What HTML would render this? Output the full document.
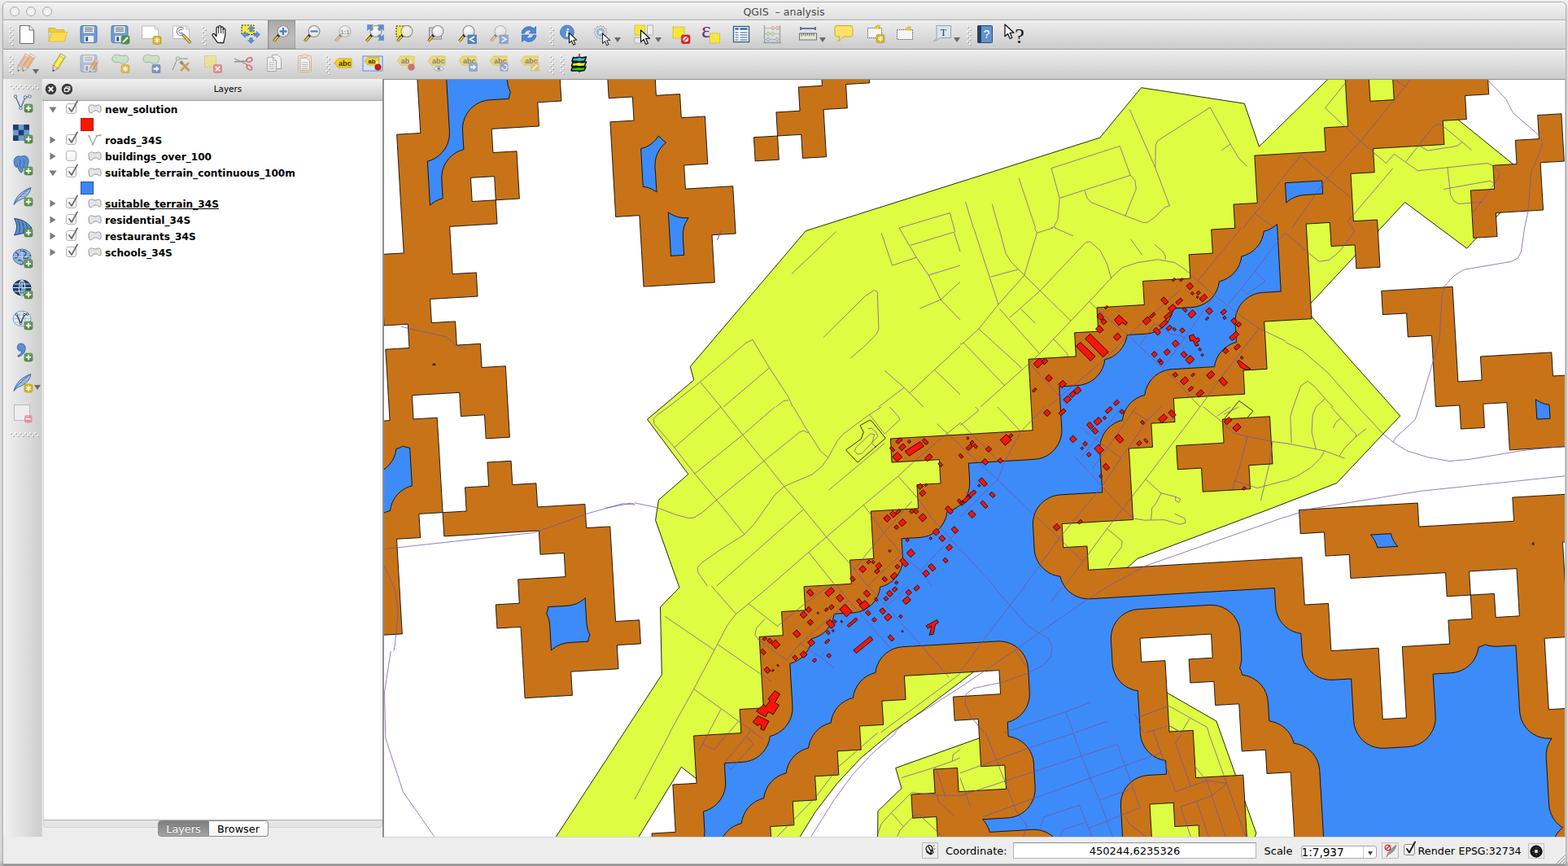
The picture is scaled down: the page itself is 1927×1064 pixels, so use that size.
<!DOCTYPE html>
<html><head><meta charset="utf-8"><title>QGIS - analysis</title>
<style>
html,body{margin:0;padding:0}
body{width:1927px;height:1064px;overflow:hidden;position:relative;background:#cfcfcf;font-family:"DejaVu Sans","Liberation Sans",sans-serif;color:#000}
.shadow{position:absolute;left:0;top:0;width:1927px;height:1064px;background:linear-gradient(#efefef 0,#e6e6e6 12px,#dfdfdf 60px,#dcdcdc 1040px,#d6d6d6 1058px,#b8b8b8 1062px,#b4b4b4 1064px)}
.win{position:absolute;left:4px;top:3px;width:1920px;height:1058px;background:#ededed;border-radius:5px 5px 3px 3px;box-shadow:0 0 0 1px #b0b0b0,0 1px 0 1px #8f8f8f,0 2px 3px 1px rgba(0,0,0,.18);overflow:hidden}
.abs{position:absolute}
.titlebar{position:absolute;left:4px;top:3px;width:1920px;height:21px;border-radius:5px 5px 0 0;background:linear-gradient(#f2f2f2,#eaeaea 45%,#dfdfdf);border-bottom:1px solid #a6a6a6}
.title{position:absolute;left:4px;top:6px;width:1919px;text-align:center;font-size:12.5px;line-height:18px;color:#4b4b4b;white-space:pre}
.tl{position:absolute;top:7.6px;width:10.5px;height:10.5px;border-radius:50%;border:1px solid #a9a9a9;background:radial-gradient(circle at 50% 70%,#fafafa,#e4e4e4);box-sizing:content-box}
.tb{position:absolute;left:4px;width:1920px;height:35px;background:linear-gradient(#fbfbfb 0,#ececec 1.5px,#dddddd 50%,#cbcbcb);border-bottom:1px solid #999}
.tb2{height:36px;border-bottom:none}
.lt{position:absolute;left:4px;top:97px;width:48px;height:931px;background:linear-gradient(90deg,#fff 0,#efefef 1.5px,#e0e0e0 50%,#cdcdcd 46px,#d9d9d9 48px)}
.ic{position:absolute;width:24px;height:24px;overflow:visible}
.hdl{position:absolute;width:5px;height:24px}
.lhead{position:absolute;left:52px;top:97px;width:418px;height:27px;background:linear-gradient(#f1f1f1,#dedede 55%,#c9c9c9);border-bottom:1px solid #a2a2a2;box-sizing:border-box}
.lhead span{position:absolute;left:0;width:456px;text-align:center;top:5px;font-size:10.4px;line-height:14px}
.tree{position:absolute;left:53px;top:124px;width:417px;height:883px;background:#fff;border-left:1px solid #d4d4d4;border-right:1px solid #fff;box-sizing:border-box}
.row{position:absolute;left:0;height:20px;font-weight:bold;font-size:12.15px;line-height:20px;white-space:nowrap}
.row .t{position:absolute;left:75px;top:1px}
.cb{position:absolute;left:27px;top:3px;width:13px;height:13px;border:1px solid #b4b4b4;border-radius:3px;background:linear-gradient(#fff,#f1f1f1);box-sizing:border-box}
.sw{position:absolute;left:45px;width:16px;height:16px;box-sizing:border-box}
.tabs{position:absolute;left:53px;top:1007px;width:417px;height:21px;background:#ededed}
.tabpane{position:absolute;left:0;top:0;width:417px;height:10px;background:#e4e4e4;border:1px solid #d0d0d0;border-top:1px solid #b0b0b0;border-radius:0 0 4px 4px;box-sizing:border-box}
.tab{position:absolute;top:1px;height:20px;box-sizing:border-box;font-size:12.8px;line-height:20px;text-align:center;border:1px solid #8b8b8b}
.status{position:absolute;left:4px;top:1029px;width:1920px;height:32px;background:#ededed;box-sizing:border-box}
.st{position:absolute;font-size:13px;line-height:16px;white-space:nowrap}
.map{position:absolute;overflow:hidden}
.mapframe{position:absolute;left:470px;top:97px;width:1454px;height:932px;border-left:2px solid #8f8f8f;border-top:1px solid #8f8f8f;border-right:1px solid #c6c6c6;border-bottom:1px solid #d2d2d2;box-sizing:border-box;pointer-events:none}

</style></head><body>
<div class="shadow"></div>
<div class="win"></div>
<div class="titlebar"></div>
<div class="tl" style="left:11.7px"></div><div class="tl" style="left:31.7px"></div><div class="tl" style="left:51.7px"></div>
<div class="title">QGIS  – analysis</div>
<div class="tb" style="top:25px"></div>
<div class="tb tb2" style="top:61px"></div>
<div class="lt"></div>
<div class="lhead"><span>Layers</span></div>
<div class="tree">
 <div class="row" style="top:0px"><svg class="abs" style="left:6px;top:7px" width="10" height="8" viewBox="0 0 10 8"><path d="M0.500,0.500h9l-4.500,7z" fill="#7c7c7c"/></svg><div class="cb"><svg class="abs" style="left:0;top:-5px;overflow:visible" width="14" height="16" viewBox="0 0 14 16"><path d="M3,10l3,4l7,-12.500" fill="none" stroke="#6e6e6e" stroke-width="1.800" stroke-linecap="round" stroke-linejoin="round"/></svg></div><svg class="abs" style="left:54px;top:4px" width="17" height="12" viewBox="0 0 17 12"><path d="M1,3.500c.5,-3 4,-3 6,-2c1.500,.8 2.500,.8 4,0c2,-1 5,-.5 5,2.500c0,2.500 .5,4 -.5,5.500c-1.500,1.500 -3,-1 -5,-1.500c-2,-.5 -3.500,.5 -5,2c-1.500,1.500 -3.500,1 -4,-1c-.5,-2 -.8,-3.500 -.5,-5.500z" fill="#e4e4e4" stroke="#8a8a8a" stroke-width=".9"/></svg><span class="t">new_solution</span></div>
 <div class="sw" style="top:21px;background:#ff1500;border:1px solid #b8160c"></div>
 <div class="row" style="top:38px"><svg class="abs" style="left:7px;top:5px" width="8" height="10" viewBox="0 0 8 10"><path d="M0.500,0.500v9l7,-4.500z" fill="#7c7c7c"/></svg><div class="cb"><svg class="abs" style="left:0;top:-5px;overflow:visible" width="14" height="16" viewBox="0 0 14 16"><path d="M3,10l3,4l7,-12.500" fill="none" stroke="#6e6e6e" stroke-width="1.800" stroke-linecap="round" stroke-linejoin="round"/></svg></div><svg class="abs" style="left:54px;top:3px" width="17" height="14" viewBox="0 0 17 14"><path d="M1.500,2l4.500,10.500l5,-10.500l4.500,-1" fill="none" stroke="#666" stroke-width=".8"/><g fill="#fff" stroke="#777" stroke-width=".6"><circle cx="1.500" cy="2" r="1"/><circle cx="6" cy="12.500" r="1"/><circle cx="11" cy="2" r="1"/><circle cx="15.500" cy="1" r="1"/></g></svg><span class="t">roads_34S</span></div>
 <div class="row" style="top:58px"><svg class="abs" style="left:7px;top:5px" width="8" height="10" viewBox="0 0 8 10"><path d="M0.500,0.500v9l7,-4.500z" fill="#7c7c7c"/></svg><div class="cb"></div><svg class="abs" style="left:54px;top:4px" width="17" height="12" viewBox="0 0 17 12"><path d="M1,3.500c.5,-3 4,-3 6,-2c1.500,.8 2.500,.8 4,0c2,-1 5,-.5 5,2.500c0,2.500 .5,4 -.5,5.500c-1.500,1.500 -3,-1 -5,-1.500c-2,-.5 -3.500,.5 -5,2c-1.500,1.500 -3.500,1 -4,-1c-.5,-2 -.8,-3.500 -.5,-5.500z" fill="#e4e4e4" stroke="#8a8a8a" stroke-width=".9"/></svg><span class="t">buildings_over_100</span></div>
 <div class="row" style="top:78px"><svg class="abs" style="left:6px;top:7px" width="10" height="8" viewBox="0 0 10 8"><path d="M0.500,0.500h9l-4.500,7z" fill="#7c7c7c"/></svg><div class="cb"><svg class="abs" style="left:0;top:-5px;overflow:visible" width="14" height="16" viewBox="0 0 14 16"><path d="M3,10l3,4l7,-12.500" fill="none" stroke="#6e6e6e" stroke-width="1.800" stroke-linecap="round" stroke-linejoin="round"/></svg></div><svg class="abs" style="left:54px;top:4px" width="17" height="12" viewBox="0 0 17 12"><path d="M1,3.500c.5,-3 4,-3 6,-2c1.500,.8 2.500,.8 4,0c2,-1 5,-.5 5,2.500c0,2.500 .5,4 -.5,5.500c-1.500,1.500 -3,-1 -5,-1.500c-2,-.5 -3.500,.5 -5,2c-1.500,1.500 -3.500,1 -4,-1c-.5,-2 -.8,-3.500 -.5,-5.500z" fill="#e4e4e4" stroke="#8a8a8a" stroke-width=".9"/></svg><span class="t">suitable_terrain_continuous_100m</span></div>
 <div class="sw" style="top:99px;background:#3b87f5;border:1px solid #2a55a0"></div>
 <div class="row" style="top:116px"><svg class="abs" style="left:7px;top:5px" width="8" height="10" viewBox="0 0 8 10"><path d="M0.500,0.500v9l7,-4.500z" fill="#7c7c7c"/></svg><div class="cb"><svg class="abs" style="left:0;top:-5px;overflow:visible" width="14" height="16" viewBox="0 0 14 16"><path d="M3,10l3,4l7,-12.500" fill="none" stroke="#6e6e6e" stroke-width="1.800" stroke-linecap="round" stroke-linejoin="round"/></svg></div><svg class="abs" style="left:54px;top:4px" width="17" height="12" viewBox="0 0 17 12"><path d="M1,3.500c.5,-3 4,-3 6,-2c1.500,.8 2.500,.8 4,0c2,-1 5,-.5 5,2.500c0,2.500 .5,4 -.5,5.500c-1.500,1.500 -3,-1 -5,-1.500c-2,-.5 -3.500,.5 -5,2c-1.500,1.500 -3.500,1 -4,-1c-.5,-2 -.8,-3.500 -.5,-5.500z" fill="#e4e4e4" stroke="#8a8a8a" stroke-width=".9"/></svg><span class="t" style="text-decoration:underline">suitable_terrain_34S</span></div>
 <div class="row" style="top:136px"><svg class="abs" style="left:7px;top:5px" width="8" height="10" viewBox="0 0 8 10"><path d="M0.500,0.500v9l7,-4.500z" fill="#7c7c7c"/></svg><div class="cb"><svg class="abs" style="left:0;top:-5px;overflow:visible" width="14" height="16" viewBox="0 0 14 16"><path d="M3,10l3,4l7,-12.500" fill="none" stroke="#6e6e6e" stroke-width="1.800" stroke-linecap="round" stroke-linejoin="round"/></svg></div><svg class="abs" style="left:54px;top:4px" width="17" height="12" viewBox="0 0 17 12"><path d="M1,3.500c.5,-3 4,-3 6,-2c1.500,.8 2.500,.8 4,0c2,-1 5,-.5 5,2.500c0,2.500 .5,4 -.5,5.500c-1.500,1.500 -3,-1 -5,-1.500c-2,-.5 -3.500,.5 -5,2c-1.500,1.500 -3.500,1 -4,-1c-.5,-2 -.8,-3.500 -.5,-5.500z" fill="#e4e4e4" stroke="#8a8a8a" stroke-width=".9"/></svg><span class="t">residential_34S</span></div>
 <div class="row" style="top:156px"><svg class="abs" style="left:7px;top:5px" width="8" height="10" viewBox="0 0 8 10"><path d="M0.500,0.500v9l7,-4.500z" fill="#7c7c7c"/></svg><div class="cb"><svg class="abs" style="left:0;top:-5px;overflow:visible" width="14" height="16" viewBox="0 0 14 16"><path d="M3,10l3,4l7,-12.500" fill="none" stroke="#6e6e6e" stroke-width="1.800" stroke-linecap="round" stroke-linejoin="round"/></svg></div><svg class="abs" style="left:54px;top:4px" width="17" height="12" viewBox="0 0 17 12"><path d="M1,3.500c.5,-3 4,-3 6,-2c1.500,.8 2.500,.8 4,0c2,-1 5,-.5 5,2.500c0,2.500 .5,4 -.5,5.500c-1.500,1.500 -3,-1 -5,-1.500c-2,-.5 -3.500,.5 -5,2c-1.500,1.500 -3.500,1 -4,-1c-.5,-2 -.8,-3.500 -.5,-5.500z" fill="#e4e4e4" stroke="#8a8a8a" stroke-width=".9"/></svg><span class="t">restaurants_34S</span></div>
 <div class="row" style="top:176px"><svg class="abs" style="left:7px;top:5px" width="8" height="10" viewBox="0 0 8 10"><path d="M0.500,0.500v9l7,-4.500z" fill="#7c7c7c"/></svg><div class="cb"><svg class="abs" style="left:0;top:-5px;overflow:visible" width="14" height="16" viewBox="0 0 14 16"><path d="M3,10l3,4l7,-12.500" fill="none" stroke="#6e6e6e" stroke-width="1.800" stroke-linecap="round" stroke-linejoin="round"/></svg></div><svg class="abs" style="left:54px;top:4px" width="17" height="12" viewBox="0 0 17 12"><path d="M1,3.500c.5,-3 4,-3 6,-2c1.500,.8 2.500,.8 4,0c2,-1 5,-.5 5,2.500c0,2.500 .5,4 -.5,5.500c-1.500,1.500 -3,-1 -5,-1.500c-2,-.5 -3.500,.5 -5,2c-1.500,1.500 -3.500,1 -4,-1c-.5,-2 -.8,-3.500 -.5,-5.500z" fill="#e4e4e4" stroke="#8a8a8a" stroke-width=".9"/></svg><span class="t">schools_34S</span></div>
</div>
<div class="tabs"><div class="tabpane"></div>
 <div class="tab" style="left:141px;width:63px;border-radius:4px 0 0 4px;background:linear-gradient(#7d7d7d,#a3a3a3);color:#fff;text-shadow:0 -1px 0 rgba(0,0,0,.35)">Layers</div>
 <div class="tab" style="left:204px;width:73px;border-radius:0 4px 4px 0;border-left:none;background:linear-gradient(#fff,#f4f4f4)">Browser</div>
</div>
<div class="status">
 <div class="abs" style="left:1129px;top:6px;width:20px;height:20px;border:1px solid #b9b9b9;box-sizing:border-box"><svg class="abs" style="left:1px;top:1px" width="16" height="16" viewBox="0 0 16 16"><path d="M5,2.500c3,-2 6,0 6,3.500c0,3 -2,4 -3,6c-1,-2 -5,-3 -5,-6c0,-1.500 .8,-2.800 2,-3.500zM6,3l3,6M3.500,9c2,3 6,5 8,2c1.500,-2.500 -1,-4 -3,-3.500" fill="none" stroke="#1a1a1a" stroke-width="1.300"/><circle cx="9" cy="11.500" r="1.200" fill="#1a1a1a"/><path d="M12,3l1.500,-1.500M12.500,6l2,0" stroke="#1a1a1a" stroke-width=".7"/></svg></div>
 <div class="st" style="left:1158px;top:8.9px">Coordinate:</div>
 <div class="abs" style="left:1241px;top:6px;width:299px;height:20px;background:#fff;border:1px solid #b3b3b3;border-top-color:#8f8f8f;box-sizing:border-box"></div>
 <div class="st" style="left:1241px;top:8.9px;width:299px;text-align:center">450244,6235326</div>
 <div class="st" style="left:1549.5px;top:8.9px">Scale</div>
 <div class="abs" style="left:1595px;top:10px;width:93px;height:16px;background:#fff;border:1px solid #a9a9a9;border-radius:3px;box-sizing:border-box"></div>
 <div class="abs" style="left:1671px;top:11px;width:1px;height:14px;background:#c8c8c8"></div>
 <div class="abs" style="left:1677px;top:17px;width:0;height:0;border-left:3.5px solid transparent;border-right:3.5px solid transparent;border-top:5px solid #444"></div>
 <div class="st" style="left:1595.5px;top:9.5px;font-size:13.6px">1:7,937</div>
 <div class="abs" style="left:1694px;top:6px;width:21px;height:20px;border:1px solid #bdbdbd;box-sizing:border-box"><svg class="abs" style="left:1px;top:0" width="18" height="18" viewBox="0 0 18 18"><path d="M4,17c1,-5 4,-9 12,-15c-1,5 -3,8 -8,11c-2,1 -3,2 -4,4z" fill="#9a9a9a" stroke="#666" stroke-width=".6"/><circle cx="5.500" cy="5.500" r="3.300" fill="none" stroke="#e02020" stroke-width="1.300"/><path d="M3.200,7.800l4.600,-4.600" stroke="#e02020" stroke-width="1.300"/></svg></div>
 <div class="abs" style="left:1721px;top:8px;width:14px;height:14px;border:1px solid #8c8c8c;border-radius:3px;background:linear-gradient(#fff,#e9e9e9);box-sizing:border-box"><svg class="abs" style="left:0;top:-5px;overflow:visible" width="15" height="17" viewBox="0 0 15 17"><path d="M3,10l3,4.500l7,-13" fill="none" stroke="#1a1a1a" stroke-width="1.900" stroke-linecap="round" stroke-linejoin="round"/></svg></div>
 <div class="st" style="left:1738.5px;top:8.9px;font-size:12.8px">Render</div>
 <div class="st" style="left:1788.5px;top:8.9px;font-size:12.5px">EPSG:32734</div>
 <div class="abs" style="left:1874px;top:7px;width:20px;height:19px;border:1px solid #c2c2c2;box-sizing:border-box"><svg class="abs" style="left:1px;top:1px" width="16" height="16" viewBox="0 0 16 16"><circle cx="8" cy="8" r="6.500" fill="#555" stroke="#111" stroke-width="2.200"/><path d="M8,1.200c-3.500,2.500 -3.500,11 0,13.600M8,1.200c3.500,2.500 3.500,11 0,13.600M1.200,8c2.500,-3.500 11,-3.500 13.600,0M1.200,8c2.500,3.500 11,3.500 13.600,0" fill="none" stroke="#111" stroke-width="1.800"/><rect x="5.800" y="5.800" width="4.400" height="4.400" fill="#ededed" stroke="#111" stroke-width=".8"/></svg></div>
 <svg class="abs" style="left:1908px;top:21px" width="12" height="12" viewBox="0 0 12 12"><path d="M0.500,11.500l11,-11M4.500,11.500l7,-7M8.500,11.500l3,-3" stroke="#8a8a8a" stroke-width="1"/><path d="M1.500,11.500l10,-10M5.500,11.500l6,-6M9.500,11.500l2,-2" stroke="#fff" stroke-width=".6"/></svg>
</div>
<div class="mapframe"></div>
<svg width="0" height="0" style="position:absolute"><defs>
<radialGradient id="lens" cx="40%" cy="35%" r="70%"><stop offset="0" stop-color="#ffffff"/><stop offset="1" stop-color="#dcdcdc"/></radialGradient>
<linearGradient id="gplus" x1="0" y1="0" x2="0" y2="1"><stop offset="0" stop-color="#6aa85a"/><stop offset="1" stop-color="#4d8a3f"/></linearGradient>
<g id="bplus"><rect x="0" y="0" width="10" height="10" rx="2" fill="url(#gplus)" stroke="#3f7a33" stroke-width=".6"/><path d="M5,1.8v6.4M1.8,5h6.4" stroke="#fff" stroke-width="2"/></g>
<g id="bstar"><rect x="0" y="0" width="10" height="10" rx="2" fill="#d9b21f" stroke="#b8940f" stroke-width=".6"/><path d="M5,1.5v7M2,3.2l6,3.6M8,3.2l-6,3.6" stroke="#fff" stroke-width="1.3"/></g>
<g id="barrow"><rect x="0" y="0" width="10" height="10" rx="1" fill="#5b7fc0" stroke="#4466a5" stroke-width=".6"/><path d="M1.5,3.8h3.5v-2.3l3.8,3.5l-3.8,3.5v-2.3h-3.5z" fill="#fff"/></g>
<g id="mag"><path d="M8.8,13.2l-6.3,7.3" stroke="#2b2b2b" stroke-width="3.4" stroke-linecap="butt"/><path d="M7.7,14.6l-5,5.8" stroke="#f7c90c" stroke-width="2.2"/><path d="M9.4,12.5l-1.6,1.9" stroke="#111" stroke-width="3.2"/><circle cx="14" cy="8.5" r="7" fill="url(#lens)" stroke="#8c8c8c" stroke-width="1.1"/></g>
<g id="magf" opacity=".5"><use href="#mag"/></g>
<path id="cursor" d="M0,0l0,9.5l2.3,-2.1l1.7,3.9l1.7,-.8l-1.7,-3.8l3.1,-.1z" fill="#fff" stroke="#111" stroke-width=".8" stroke-linejoin="round"/>
<g id="floppy"><rect x="2" y="1.5" width="20" height="21" rx="2" fill="#6e9cd2" stroke="#4b79b1" stroke-width="1"/><rect x="5.5" y="2.2" width="13" height="8.3" fill="#f6f6f6" stroke="#9db6d6" stroke-width=".4"/><path d="M7,4.3h10M7,6.3h10M7,8.3h10" stroke="#555" stroke-width=".9"/><rect x="6.5" y="14" width="11.5" height="8" fill="#efefef"/><rect x="8.3" y="15.3" width="2.8" height="5.4" fill="#2f5a8d"/></g>
<g id="tag"><path d="M0,5.5l4.5,-5.5h16.5v11h-16.5z" fill="#f5d21a" stroke="#c9a70c" stroke-width=".9"/></g>
<g id="blob"><path d="M2,5c1,-4 6,-4.5 9,-3c3,1.5 5,-.5 8,0c3,.8 3.5,5 1.5,8c-2,2.5 -6,2.5 -8.5,1c-2.5,-1.5 -5,.5 -7.5,-.5c-2.500,-1 -3,-3.500 -2.500,-5.500z" fill="#bfe0c0" stroke="#8d9a8d" stroke-width=".9"/></g>
<g id="dots"><circle cx="1.900" cy="1.900" r="1" fill="#9a9a9a"/><circle cx="1.100" cy="1.100" r="1" fill="#fff"/></g>
</defs></svg>
<svg class="abs" style="left:10.5px;top:31.5px" width="7" height="26" viewBox="0 0 7 26"><use href="#dots" x="0" y="0"/><use href="#dots" x="3" y="3"/><use href="#dots" x="0" y="6"/><use href="#dots" x="3" y="9"/><use href="#dots" x="0" y="12"/><use href="#dots" x="3" y="15"/><use href="#dots" x="0" y="18"/><use href="#dots" x="3" y="21"/></svg>
<svg class="ic" style="left:21.0px;top:29.7px" viewBox="0 0 24 24"><path d="M3.500,1.500h11.500l5.500,5.500v15.500a1,1 0 0 1 -1,1h-15a1,1 0 0 1 -1,-1z" fill="#fff" stroke="#6c6c6c" stroke-width="1.100"/><path d="M15,1.500v5.500h5.500" fill="#f4f4f4" stroke="#6c6c6c" stroke-width="1"/></svg>
<svg class="ic" style="left:58.8px;top:29.7px" viewBox="0 0 24 24"><path d="M1,4.500h7.500l1,2h10.500v3h-19z" fill="#f0cb3c" stroke="#cfad35" stroke-width=".8"/><path d="M1,4.500v16.500" stroke="#cfad35" stroke-width=".8"/><path d="M1,21l3.800,-11.500h19l-3.800,11.500z" fill="#fcdc4d" stroke="#d6b53c" stroke-width=".8"/></svg>
<svg class="ic" style="left:97.0px;top:29.7px" viewBox="0 0 24 24"><use href="#floppy"/></svg>
<svg class="ic" style="left:135.2px;top:29.7px" viewBox="0 0 24 24"><use href="#floppy"/><g transform="translate(14,14)"><rect width="10" height="10" rx="2" fill="#4f9150" stroke="#3e7a40" stroke-width=".6"/><path d="M2.500,7.500l5,-5" stroke="#fff" stroke-width="2.200" stroke-linecap="round"/></g></svg>
<svg class="ic" style="left:172.5px;top:29.7px" viewBox="0 0 24 24"><path d="M1.500,2h16l4,4v11.500h-20z" fill="#fff" stroke="#b4b4b4" stroke-width=".9"/><path d="M17.500,2v4h4" fill="none" stroke="#b4b4b4" stroke-width=".8"/><use href="#bstar" x="15" y="14.500"/></svg>
<svg class="ic" style="left:210.5px;top:29.7px" viewBox="0 0 24 24"><path d="M1.500,2h16l4,4v11.500h-20z" fill="#fff" stroke="#b4b4b4" stroke-width=".9"/><path d="M17.500,2v4h4" fill="none" stroke="#b4b4b4" stroke-width=".8"/><path d="M14,13l8,8.500" stroke="#6b5a20" stroke-width="3.600" stroke-linecap="round"/><path d="M14,13l8,8.500" stroke="#e9c244" stroke-width="2.200" stroke-linecap="round"/><path d="M14.500,13.500l-3,-3.200" stroke="#9a9a9a" stroke-width="3"/><path d="M13.800,6.200a3.600,3.600 0 1 0 -1.500,5.800" fill="none" stroke="#555" stroke-width="3.400"/><path d="M13.800,6.200a3.600,3.600 0 1 0 -1.500,5.800" fill="none" stroke="#ececec" stroke-width="2"/></svg>
<svg class="abs" style="left:247.5px;top:31.5px" width="7" height="26" viewBox="0 0 7 26"><use href="#dots" x="0" y="0"/><use href="#dots" x="3" y="3"/><use href="#dots" x="0" y="6"/><use href="#dots" x="3" y="9"/><use href="#dots" x="0" y="12"/><use href="#dots" x="3" y="15"/><use href="#dots" x="0" y="18"/><use href="#dots" x="3" y="21"/></svg>
<svg class="ic" style="left:259.0px;top:29.7px" viewBox="0 0 24 24"><path d="M8.500,22.500c-2,-2.800 -4.500,-6 -6.300,-8.800c-1,-1.700 1,-3 2.400,-1.700l2.400,2.500v-10c0,-2 2.600,-2 2.700,0v-1.500c0,-2 2.800,-2 2.800,0v1.300c0,-1.800 2.700,-1.800 2.700,0v2c.2,-1.700 2.600,-1.500 2.600,.3c0,4 .5,8 -1,11c-.5,1.500 -1,3 -1,5z" fill="#fff" stroke="#111" stroke-width="1.200" stroke-linejoin="round"/><path d="M9.700,4.500v6.500M12.500,4v7M15.200,5v6.300" stroke="#111" stroke-width=".9"/></svg>
<svg class="ic" style="left:296.0px;top:29.7px" viewBox="0 0 24 24"><rect x="1" y="1" width="15" height="11.500" fill="#f6e73a" stroke="#222" stroke-width="1" stroke-dasharray="2,1.500"/><g fill="#5b8fd0" stroke="#3f6fae" stroke-width=".5"><path d="M12.500,1.500l4,4h-2.300v3.500h-3.400v-3.500h-2.300z"/><path d="M12.500,23.500l4,-4h-2.300v-3h-3.400v3h-2.300z"/><path d="M1.500,12.500l4,-4v2.300h3.500v3.400h-3.500v2.300z"/><path d="M23.500,12.500l-4,-4v2.300h-3.500v3.400h3.500v2.300z"/></g></svg>
<div class="abs" style="left:329px;top:25px;width:34px;height:35px;background:linear-gradient(#a9a9a9,#bdbdbd 60%,#b3b3b3);box-shadow:inset 1px 0 2px rgba(0,0,0,.25),inset -1px 0 1px rgba(0,0,0,.12)"></div>
<svg class="ic" style="left:334.0px;top:29.7px" viewBox="0 0 24 24"><use href="#mag"/><path d="M14,4v9M9.500,8.500h9" stroke="#4a7fc8" stroke-width="2.300"/></svg>
<svg class="ic" style="left:371.5px;top:29.7px" viewBox="0 0 24 24"><use href="#mag"/><path d="M9.500,8.500h9" stroke="#4a7fc8" stroke-width="2.300"/></svg>
<svg class="ic" style="left:409.5px;top:29.7px" viewBox="0 0 24 24"><use href="#magf"/><text x="14" y="11.500" font-size="8" font-weight="bold" text-anchor="middle" fill="#9a9a9a" font-family="Liberation Sans,sans-serif">1:1</text></svg>
<svg class="ic" style="left:448.0px;top:29.7px" viewBox="0 0 24 24"><use href="#mag"/><g fill="#5b8fd0" stroke="#3f6fae" stroke-width=".4"><path d="M3.500,0.500h7l-2.300,2.300l2.800,2.800l-2.400,2.400l-2.800,-2.800l-2.300,2.300z"/><path d="M23.500,0.500v7l-2.300,-2.300l-2.800,2.800l-2.400,-2.400l2.800,-2.800l-2.300,-2.300z"/><path d="M23.500,19.500h-7l2.300,-2.300l-2.800,-2.800l2.400,-2.400l2.800,2.800l2.300,-2.300z"/></g></svg>
<svg class="ic" style="left:486.0px;top:29.7px" viewBox="0 0 24 24"><rect x="1" y="2" width="17" height="13" fill="#f6e73a" stroke="#222" stroke-width="1" stroke-dasharray="2,1.500"/><g opacity=".93"><use href="#mag"/></g><path d="M9,3h8v11h-8" fill="#efe9c4" opacity=".55"/></svg>
<svg class="ic" style="left:524.0px;top:29.7px" viewBox="0 0 24 24"><rect x="3.500" y="4" width="15" height="14" fill="#d8c8d8" stroke="#857a85" stroke-width=".9"/><use href="#mag"/></svg>
<svg class="ic" style="left:562.0px;top:29.7px" viewBox="0 0 24 24"><use href="#mag"/><rect x="13" y="13" width="10.500" height="10.500" fill="#4f83c7" stroke="#3a66a5" stroke-width=".6"/><path d="M21,15l-5.500,3.300l5.500,3.300" fill="none" stroke="#fff" stroke-width="1.800"/></svg>
<svg class="ic" style="left:600.5px;top:29.7px" viewBox="0 0 24 24"><use href="#magf"/><g opacity=".55"><rect x="13" y="13" width="10.500" height="10.500" fill="#4f83c7" stroke="#3a66a5" stroke-width=".6"/><path d="M15.500,15l5.500,3.300l-5.500,3.300" fill="none" stroke="#fff" stroke-width="1.800"/></g></svg>
<svg class="ic" style="left:638.0px;top:29.7px" viewBox="0 0 24 24"><path d="M3,11a9,9 0 0 1 15,-6l2.500,-2.500v8.500h-8.500l3,-3a5.500,5.500 0 0 0 -8.500,3z" fill="#4a8ad8" stroke="#2f68b5" stroke-width=".7"/><path d="M21,13a9,9 0 0 1 -15,6l-2.500,2.500v-8.500h8.500l-3,3a5.500,5.500 0 0 0 8.500,-3z" fill="#4a8ad8" stroke="#2f68b5" stroke-width=".7"/></svg>
<svg class="abs" style="left:675px;top:31.5px" width="7" height="26" viewBox="0 0 7 26"><use href="#dots" x="0" y="0"/><use href="#dots" x="3" y="3"/><use href="#dots" x="0" y="6"/><use href="#dots" x="3" y="9"/><use href="#dots" x="0" y="12"/><use href="#dots" x="3" y="15"/><use href="#dots" x="0" y="18"/><use href="#dots" x="3" y="21"/></svg>
<svg class="ic" style="left:687.0px;top:29.7px" viewBox="0 0 24 24"><circle cx="10" cy="9.500" r="8.500" fill="#5b8fd0" stroke="#3f72b5" stroke-width=".8"/><text x="10" y="14.500" font-size="14" font-style="italic" font-weight="bold" text-anchor="middle" fill="#fff" font-family="Liberation Serif,serif">i</text><g transform="translate(12.500,10.500) scale(1.300)"><use href="#cursor"/></g></svg>
<svg class="ic" style="left:729.0px;top:29.7px" viewBox="0 0 24 24"><path d="M9,1l1.500,2.200l2.600,-.8l.4,2.700l2.700,.4l-.8,2.600l2.200,1.500l-2.200,1.500l.8,2.600l-2.700,.4l-.4,2.700l-2.600,-.8l-1.500,2.200l-1.500,-2.200l-2.600,.8l-.4,-2.700l-2.700,-.4l.8,-2.600l-2.200,-1.500l2.200,-1.500l-.8,-2.600l2.700,-.4l.4,-2.700l2.600,.8z" fill="#e6e6e6" stroke="#9a9a9a" stroke-width=".8"/><circle cx="9" cy="9.600" r="4.800" fill="#9db8de" stroke="#7f9cc8" stroke-width=".6"/><path d="M7.500,7.200v4.800l4,-2.400z" fill="#fff"/><g opacity=".85" transform="translate(11.500,11) scale(1.300)"><use href="#cursor"/></g></svg>
<svg class="abs" style="left:755.0px;top:46.0px" width="8" height="6" viewBox="0 0 8 6"><path d="M0,0h8l-4,6z" fill="#6a6a6a"/></svg>
<svg class="ic" style="left:779.0px;top:29.7px" viewBox="0 0 24 24"><rect x="1" y="1" width="12.500" height="12" fill="#f6e73a" stroke="#cdbd2a" stroke-width=".7"/><rect x="16.500" y="1" width="7" height="12" fill="#ececec" stroke="#a6a6a6" stroke-width=".8"/><rect x="1" y="16.500" width="12.500" height="6.500" fill="#ececec" stroke="#a6a6a6" stroke-width=".8"/><g transform="translate(8.500,7) scale(1.550)"><use href="#cursor"/></g></svg>
<svg class="abs" style="left:805.0px;top:46.0px" width="8" height="6" viewBox="0 0 8 6"><path d="M0,0h8l-4,6z" fill="#6a6a6a"/></svg>
<svg class="ic" style="left:824.5px;top:29.7px" viewBox="0 0 24 24"><rect x="2" y="3" width="14" height="14" fill="#f6e73a" stroke="#b9a51e" stroke-width=".9" stroke-dasharray="1.500,1.200"/><rect x="12.500" y="13" width="10.500" height="10.500" rx="2" fill="#e02020" stroke="#b81414" stroke-width=".6"/><circle cx="17.750" cy="18.250" r="3.300" fill="#fff"/><path d="M15.500,20.500l4.500,-4.500" stroke="#e02020" stroke-width="1.500"/></svg>
<svg class="ic" style="left:862.0px;top:29.7px" viewBox="0 0 24 24"><text x="0" y="16" font-size="28" fill="#6b2f7e" font-family="Liberation Serif,serif">ε</text><rect x="10.500" y="11" width="12" height="12" fill="#f6e73a" stroke="#b9a51e" stroke-width=".9" stroke-dasharray="1.500,1.200"/></svg>
<svg class="ic" style="left:899.0px;top:29.7px" viewBox="0 0 24 24"><rect x="2.500" y="2.500" width="19" height="19" fill="#fff" stroke="#2e5a84" stroke-width="1.300"/><rect x="3.500" y="3.500" width="17" height="4" fill="#cfe0f2"/><path d="M4.500,5.500h4M10.500,5.500h9" stroke="#2e5a84" stroke-width="1.800"/><path d="M4.500,10h4M10.500,10h9M4.500,13h4M10.500,13h9M4.500,16h4M10.500,16h9M4.500,19h4M10.500,19h9" stroke="#2e5a84" stroke-width="1.100"/></svg>
<svg class="ic" style="left:937.0px;top:29.7px" viewBox="0 0 24 24"><g opacity=".6"><path d="M2.500,1v21M21.500,1v21M1,22.500h22" stroke="#777" stroke-width="1.300" fill="none"/><path d="M2.500,4.500h19M2.500,11.500h19M2.500,18.500h19" stroke="#888" stroke-width=".7"/><g stroke-width=".8"><path d="M13,2l2.500,2.500l-2.500,2.500l-2.500,-2.500zM18.500,2l2.500,2.500l-2.500,2.500l-2.500,-2.500z" fill="#f4b4b4" stroke="#d24a4a"/><path d="M7,9l2.500,2.500l-2.500,2.500l-2.500,-2.500zM12.500,9l2.500,2.500l-2.500,2.500l-2.500,-2.500z" fill="#b8e0b8" stroke="#4aa24a"/><path d="M7,16l2.500,2.500l-2.500,2.500l-2.500,-2.500zM18,16l2.500,2.500l-2.500,2.500l-2.500,-2.500z" fill="#b4cdf0" stroke="#4a7ac2"/></g></g></svg>
<svg class="ic" style="left:981.0px;top:29.7px" viewBox="0 0 24 24"><path d="M3,3v4M21,3v4M3,5h18" stroke="#2e5a84" stroke-width="1.400" fill="none"/><rect x="1.500" y="11" width="21" height="8" fill="#e0e6d8" stroke="#666" stroke-width=".9"/><path d="M4,11v3.500M6.500,11v2.500M9,11v3.500M11.500,11v2.500M14,11v3.500M16.500,11v2.500M19,11v3.500" stroke="#444" stroke-width=".8"/></svg>
<svg class="abs" style="left:1007.0px;top:46.0px" width="8" height="6" viewBox="0 0 8 6"><path d="M0,0h8l-4,6z" fill="#6a6a6a"/></svg>
<svg class="ic" style="left:1025.0px;top:29.7px" viewBox="0 0 24 24"><path d="M4,1.500h16a3,3 0 0 1 3,3v7.500a3,3 0 0 1 -3,3h-8.500c-1.500,2.500 -3.500,4.500 -6.500,5.500c1.500,-1.800 2,-3.700 2,-5.500h-3a3,3 0 0 1 -3,-3v-7.500a3,3 0 0 1 3,-3z" fill="#fce26a" stroke="#cfa918" stroke-width="1"/></svg>
<svg class="ic" style="left:1065.0px;top:29.7px" viewBox="0 0 24 24"><rect x="1.500" y="4.500" width="17" height="12" fill="#f4f4f4" stroke="#444" stroke-width="1" stroke-dasharray="1.200,1.200"/><path d="M11,5v-3h2v-1h3v4z" fill="#f3d01c" stroke="#c6a410" stroke-width=".6"/><use href="#bstar" x="12" y="12.500"/></svg>
<svg class="ic" style="left:1101.0px;top:29.7px" viewBox="0 0 24 24"><rect x="1.500" y="6.500" width="19" height="12" fill="#f4f4f4" stroke="#444" stroke-width="1" stroke-dasharray="1.200,1.200"/><path d="M13,7v-3h2v-1h3v4z" fill="#f3d01c" stroke="#c6a410" stroke-width=".6"/></svg>
<svg class="ic" style="left:1146.0px;top:29.7px" viewBox="0 0 24 24"><path d="M5,1.500h17.500v15h-12.500l-8.500,4.500l4,-4.500h-.5z" fill="#dbe5ef" stroke="#8b97a3" stroke-width=".9"/><text x="13.500" y="13.500" font-size="12" text-anchor="middle" fill="#333" font-family="Liberation Serif,serif">T</text></svg>
<svg class="abs" style="left:1171.5px;top:46.0px" width="8" height="6" viewBox="0 0 8 6"><path d="M0,0h8l-4,6z" fill="#6a6a6a"/></svg>
<svg class="abs" style="left:1187.5px;top:31.5px" width="7" height="26" viewBox="0 0 7 26"><use href="#dots" x="0" y="0"/><use href="#dots" x="3" y="3"/><use href="#dots" x="0" y="6"/><use href="#dots" x="3" y="9"/><use href="#dots" x="0" y="12"/><use href="#dots" x="3" y="15"/><use href="#dots" x="0" y="18"/><use href="#dots" x="3" y="21"/></svg>
<svg class="ic" style="left:1198.0px;top:29.7px" viewBox="0 0 24 24"><rect x="3.500" y="1.500" width="18" height="21" rx="1" fill="#5f93d3" stroke="#2d4b6d" stroke-width="1"/><rect x="3.500" y="1.500" width="4.500" height="21" fill="#2c4057"/><text x="14.500" y="17" font-size="14" text-anchor="middle" fill="#fff" font-family="Liberation Sans,sans-serif">?</text></svg>
<svg class="ic" style="left:1235.0px;top:29.7px" viewBox="0 0 24 24"><g transform="translate(0,0) scale(1.550)"><use href="#cursor"/></g><text x="18" y="23" font-size="26" text-anchor="middle" fill="#111" font-family="Liberation Serif,serif">?</text></svg>
<svg class="abs" style="left:10.5px;top:67.5px" width="7" height="26" viewBox="0 0 7 26"><use href="#dots" x="0" y="0"/><use href="#dots" x="3" y="3"/><use href="#dots" x="0" y="6"/><use href="#dots" x="3" y="9"/><use href="#dots" x="0" y="12"/><use href="#dots" x="3" y="15"/><use href="#dots" x="0" y="18"/><use href="#dots" x="3" y="21"/></svg>
<svg class="ic" style="left:20.0px;top:66.2px" viewBox="0 0 24 24"><g opacity=".6"><g transform="translate(-4,0)"><g transform="rotate(32 12 12)"><path d="M8.500,0h7v17l-3.500,6.500l-3.500,-6.500z" fill="#e89a6a" stroke="#b86a3c" stroke-width=".6"/><path d="M10.800,0v17h2.400v-17" fill="#e8b890"/><path d="M8.500,0h7v2.500h-7z" fill="#f4f4f4" stroke="#b86a3c" stroke-width=".5"/><path d="M8.500,17l3.500,6.500l3.500,-6.500z" fill="#dadada" stroke="#777" stroke-width=".5"/><path d="M11,21.500l1,2l1,-2z" fill="#222"/></g></g><g transform="translate(2,0)"><g transform="rotate(32 12 12)"><path d="M8.500,0h7v17l-3.500,6.500l-3.500,-6.500z" fill="#f08850" stroke="#b86a3c" stroke-width=".6"/><path d="M10.800,0v17h2.400v-17" fill="#f7b23c"/><path d="M8.500,0h7v2.500h-7z" fill="#f4f4f4" stroke="#b86a3c" stroke-width=".5"/><path d="M8.500,17l3.500,6.500l3.500,-6.500z" fill="#dadada" stroke="#777" stroke-width=".5"/><path d="M11,21.500l1,2l1,-2z" fill="#222"/></g></g></g></svg>
<svg class="abs" style="left:40.0px;top:85.0px" width="8" height="6" viewBox="0 0 8 6"><path d="M0,0h8l-4,6z" fill="#6a6a6a"/></svg>
<svg class="ic" style="left:59.0px;top:66.2px" viewBox="0 0 24 24"><g transform="rotate(32 12 12)"><path d="M8.500,0h7v17l-3.500,6.500l-3.500,-6.500z" fill="#f2df22" stroke="#8a7a12" stroke-width=".6"/><path d="M10.800,0v17h2.400v-17" fill="#fbf08a"/><path d="M8.500,0h7v2.500h-7z" fill="#f4f4f4" stroke="#8a7a12" stroke-width=".5"/><path d="M8.500,17l3.500,6.500l3.500,-6.500z" fill="#dadada" stroke="#777" stroke-width=".5"/><path d="M11,21.500l1,2l1,-2z" fill="#222"/></g></svg>
<svg class="ic" style="left:97.0px;top:66.2px" viewBox="0 0 24 24"><g opacity=".45"><use href="#floppy"/></g><g opacity=".7" transform="translate(9,7) scale(.7)"><g transform="rotate(32 12 12)"><path d="M8.500,0h7v17l-3.500,6.500l-3.500,-6.500z" fill="#f08850" stroke="#b86a3c" stroke-width=".6"/><path d="M10.800,0v17h2.400v-17" fill="#f7b23c"/><path d="M8.500,0h7v2.500h-7z" fill="#f4f4f4" stroke="#b86a3c" stroke-width=".5"/><path d="M8.500,17l3.500,6.500l3.500,-6.500z" fill="#dadada" stroke="#777" stroke-width=".5"/><path d="M11,21.500l1,2l1,-2z" fill="#222"/></g></g></svg>
<svg class="ic" style="left:135.5px;top:66.2px" viewBox="0 0 24 24"><g opacity=".75"><use href="#blob"/><use href="#bstar" x="13" y="13.500"/></g></svg>
<svg class="ic" style="left:173.5px;top:66.2px" viewBox="0 0 24 24"><g opacity=".75"><use href="#blob"/><use href="#barrow" x="13" y="13.500"/></g></svg>
<svg class="ic" style="left:211.0px;top:66.2px" viewBox="0 0 24 24"><g opacity=".8"><path d="M1,20l6,-14h13" fill="none" stroke="#777" stroke-width="1"/><circle cx="7.500" cy="6" r="2.300" fill="#bfe0c0" stroke="#7d9a7d" stroke-width=".8"/><path d="M11,21l10,-10" stroke="#b8a03a" stroke-width="2.600"/><path d="M12,11l9.500,10" stroke="#c98a3e" stroke-width="3"/><path d="M10.500,9.500l3,3" stroke="#777" stroke-width="3.500"/></g></svg>
<svg class="ic" style="left:250.0px;top:66.2px" viewBox="0 0 24 24"><g opacity=".6"><rect x="1.500" y="2.500" width="14" height="14" fill="#f0e36a" stroke="#b9a51e" stroke-width=".9" stroke-dasharray="1.500,1.200"/><rect x="12.500" y="13.500" width="10" height="10" rx="1.500" fill="#e85a5a" stroke="#c83a3a" stroke-width=".6"/><path d="M14.800,15.800l5.400,5.400M20.200,15.800l-5.400,5.400" stroke="#fff" stroke-width="1.800"/></g></svg>
<svg class="ic" style="left:287.0px;top:66.2px" viewBox="0 0 24 24"><g opacity=".65"><path d="M1,6l15,7M1,10l15,-1" stroke="#666" stroke-width="1.300"/><ellipse cx="19.500" cy="7.500" rx="3.600" ry="2.400" transform="rotate(-25 19.500 7.500)" fill="none" stroke="#d83a3a" stroke-width="1.600"/><ellipse cx="19.500" cy="17" rx="3.600" ry="2.400" transform="rotate(35 19.500 17)" fill="none" stroke="#d83a3a" stroke-width="1.600"/><path d="M15,9.500l2,-1M15.500,12.500l2,2.500" stroke="#d83a3a" stroke-width="1.500"/></g></svg>
<svg class="ic" style="left:324.5px;top:66.2px" viewBox="0 0 24 24"><g opacity=".55"><path d="M9.500,1.500h7l4,4v13h-11z" fill="#fff" stroke="#777" stroke-width=".9"/><path d="M3.500,4.500h7l4,4v13h-11z" fill="#fff" stroke="#777" stroke-width=".9"/><path d="M10.500,4.500v4h4" fill="none" stroke="#777" stroke-width=".8"/><path d="M5.500,11h7M5.500,13.500h7M5.500,16h7M5.500,18.500h7" stroke="#888" stroke-width=".8"/></g></svg>
<svg class="ic" style="left:362.5px;top:66.2px" viewBox="0 0 24 24"><g opacity=".6"><rect x="3.500" y="2.500" width="16" height="20" rx="1" fill="#f3dcc2" stroke="#d39a5a" stroke-width="1"/><rect x="8.500" y="1" width="6" height="3.500" rx="1" fill="#f3dcc2" stroke="#d39a5a" stroke-width=".9"/><path d="M6,5.500h8l3.500,3.500v11.500h-11.500z" fill="#fff" stroke="#888" stroke-width=".8"/><path d="M8,11h7.500M8,13.500h7.500M8,16h7.500M8,18.500h7.500" stroke="#888" stroke-width=".8"/></g></svg>
<svg class="abs" style="left:400px;top:67.5px" width="7" height="26" viewBox="0 0 7 26"><use href="#dots" x="0" y="0"/><use href="#dots" x="3" y="3"/><use href="#dots" x="0" y="6"/><use href="#dots" x="3" y="9"/><use href="#dots" x="0" y="12"/><use href="#dots" x="3" y="15"/><use href="#dots" x="0" y="18"/><use href="#dots" x="3" y="21"/></svg>
<svg class="ic" style="left:409.5px;top:66.2px" viewBox="0 0 24 24"><g transform="translate(1,6)"><g opacity="1"><use href="#tag"/><text x="12.800" y="9" font-size="9" font-weight="bold" text-anchor="middle" fill="#333" font-family="Liberation Sans,sans-serif">abc</text></g></g></svg>
<svg class="ic" style="left:448.0px;top:69.2px" viewBox="0 0 24 24"><rect x="-2" y="0" width="24" height="18" fill="#d3e2f6" stroke="#5b8ad6" stroke-width="1"/><g transform="translate(0,1.500) scale(.85)"><g opacity="1"><use href="#tag"/><text x="10.500" y="9" font-size="9" font-weight="bold" text-anchor="middle" fill="#333" font-family="Liberation Sans,sans-serif">ab</text></g></g><path d="M15,6l1.500,7" stroke="#f4f4f4" stroke-width="1.800"/><circle cx="16.500" cy="13.500" r="3.800" fill="#c02020" stroke="#8a1010" stroke-width=".5"/></svg>
<svg class="ic" style="left:488.0px;top:69.2px" viewBox="0 0 24 24"><g opacity=".55"><g transform="translate(0,0)"><g opacity="1"><use href="#tag"/><text x="10" y="9" font-size="9" font-weight="bold" text-anchor="middle" fill="#333" font-family="Liberation Sans,sans-serif">ab</text></g></g><path d="M16,5l1.500,7" stroke="#f4f4f4" stroke-width="1.800"/><circle cx="17.500" cy="13.500" r="4.300" fill="#c02020"/></g></svg>
<svg class="ic" style="left:525.5px;top:69.2px" viewBox="0 0 24 24"><g opacity=".55"><g opacity="1"><use href="#tag"/><text x="12.800" y="9" font-size="9" font-weight="bold" text-anchor="middle" fill="#333" font-family="Liberation Sans,sans-serif">abc</text></g><path d="M7,15.500c3,-4 9,-4 12.500,0c-3.500,3.500 -9.500,3.500 -12.500,0z" fill="#fff" stroke="#555" stroke-width=".8"/><circle cx="13.300" cy="15.300" r="2.300" fill="#5b8fd0"/><circle cx="13.300" cy="15.300" r="1" fill="#123"/></g></svg>
<svg class="ic" style="left:563.5px;top:69.2px" viewBox="0 0 24 24"><g opacity=".55"><g opacity="1"><use href="#tag"/><text x="12.800" y="9" font-size="9" font-weight="bold" text-anchor="middle" fill="#333" font-family="Liberation Sans,sans-serif">abc</text></g><use href="#barrow" x="12.500" y="8.500"/></g></svg>
<svg class="ic" style="left:601.5px;top:69.2px" viewBox="0 0 24 24"><g opacity=".55"><g opacity="1"><use href="#tag"/><text x="12.800" y="9" font-size="9" font-weight="bold" text-anchor="middle" fill="#333" font-family="Liberation Sans,sans-serif">abc</text></g><rect x="12.500" y="8.500" width="10" height="10" rx="1" fill="#5b7fc0"/><path d="M15,14a3,3 0 1 0 2.500,-3.200" fill="none" stroke="#fff" stroke-width="1.300"/><path d="M14,15.500l1,-2.500l1.800,1.800z" fill="#fff"/></g></svg>
<svg class="ic" style="left:639.5px;top:69.2px" viewBox="0 0 24 24"><g opacity=".55"><g opacity="1"><use href="#tag"/><text x="12.800" y="9" font-size="9" font-weight="bold" text-anchor="middle" fill="#333" font-family="Liberation Sans,sans-serif">abc</text></g><rect x="12.500" y="8.500" width="10" height="10" rx="1" fill="#d9b21f"/><path d="M14.500,16.500l5.500,-5.500" stroke="#fff" stroke-width="2"/><path d="M13.800,17.500l.5,-2l1.500,1.500z" fill="#fff"/></g></svg>
<svg class="abs" style="left:675px;top:67.5px" width="7" height="26" viewBox="0 0 7 26"><use href="#dots" x="0" y="0"/><use href="#dots" x="3" y="3"/><use href="#dots" x="0" y="6"/><use href="#dots" x="3" y="9"/><use href="#dots" x="0" y="12"/><use href="#dots" x="3" y="15"/><use href="#dots" x="0" y="18"/><use href="#dots" x="3" y="21"/></svg>
<svg class="abs" style="left:688px;top:67.5px" width="7" height="26" viewBox="0 0 7 26"><use href="#dots" x="0" y="0"/><use href="#dots" x="3" y="3"/><use href="#dots" x="0" y="6"/><use href="#dots" x="3" y="9"/><use href="#dots" x="0" y="12"/><use href="#dots" x="3" y="15"/><use href="#dots" x="0" y="18"/><use href="#dots" x="3" y="21"/></svg>
<svg class="ic" style="left:699.5px;top:66.2px" viewBox="0 0 24 24"><path d="M12,0v24" stroke="#e81010" stroke-width="1.200" stroke-dasharray="3.500,1.500"/><g stroke="#111" stroke-width="1.600" stroke-linejoin="round"><path d="M3.500,16.500c3,1.500 6,-1 9,0c3,1 5,-.5 7.500,-.5l-2,4.500c-3,0 -5,1.500 -8,.5c-2.500,-1 -5,1 -8,-.5z" fill="#18d818"/><path d="M4,10.500c3,1.500 6,-1 9,0c3,1 5,-.5 7.500,-.5l-2,5c-3,0 -5,1.500 -8,.5c-2.500,-1 -5,1 -8,-.5z" fill="#f4f410"/><path d="M4.500,4.500c3,1.500 6,-1 9,0c3,1 5,-.5 7,-.5l-2,5c-3,0 -5,1.500 -8,.5c-2.500,-1 -5,1 -7.500,-.5z" fill="#20c8e8"/></g><path d="M12,0v5M12,8.500v2" stroke="#e81010" stroke-width="1.200"/></svg>
<svg class="abs" style="left:12px;top:104px" width="38" height="7" viewBox="0 0 38 7"><use href="#dots" x="0" y="0"/><use href="#dots" x="3" y="3"/><use href="#dots" x="6" y="0"/><use href="#dots" x="9" y="3"/><use href="#dots" x="12" y="0"/><use href="#dots" x="15" y="3"/><use href="#dots" x="18" y="0"/><use href="#dots" x="21" y="3"/><use href="#dots" x="24" y="0"/><use href="#dots" x="27" y="3"/><use href="#dots" x="30" y="0"/><use href="#dots" x="33" y="3"/></svg>
<svg class="ic" style="left:16.0px;top:113.5px" viewBox="0 0 24 24"><path d="M3,4.500l6.500,14.500l5.500,-13.500l5.500,-1" fill="none" stroke="#3f6a9a" stroke-width="1.200"/><g fill="#f4f8fc" stroke="#3f6a9a" stroke-width="1"><circle cx="3" cy="4.500" r="1.700"/><circle cx="9.500" cy="19" r="1.700"/><circle cx="15" cy="5.500" r="1.700"/><circle cx="20.500" cy="4.500" r="1.700"/></g><use href="#bplus" x="14" y="14"/></svg>
<svg class="ic" style="left:16.0px;top:152.0px" viewBox="0 0 24 24"><g><rect x="0" y="1" width="20" height="20" fill="#6b9bd2"/><g fill="#1f3f68"><rect x="0" y="1" width="6.700" height="6.700"/><rect x="13.300" y="1" width="6.700" height="6.700"/><rect x="6.700" y="7.700" width="6.600" height="6.600"/><rect x="0" y="14.300" width="6.700" height="6.700"/></g></g><use href="#bplus" x="14" y="14"/></svg>
<svg class="ic" style="left:16.0px;top:190.5px" viewBox="0 0 24 24"><path d="M4,2c-3,1 -3.500,6 -2,10c1,2 2,3 3,2.500l.5,-3c.5,3 1.500,7 3.500,9c1.500,1 3,0 3,-2l.3,-4c2,1 4,.5 5,-1c2,-3 2.500,-8 .5,-11c-2,-2.500 -6,-2.500 -8,-1c-2,-1 -4,-1 -5.800,.5z" fill="#5b8fd0" stroke="#2f5f9f" stroke-width=".9"/><path d="M9,5c-.5,3 -.5,7 0,10M13,4.500c1,2 1,6 -.5,9" fill="none" stroke="#2f5f9f" stroke-width=".8"/><use href="#bplus" x="14" y="14"/></svg>
<svg class="ic" style="left:16.0px;top:228.5px" viewBox="0 0 24 24"><path d="M1,22.500c2,-8 7,-16 21,-21c-1,6 -5,12 -13,15c-3,1 -5,2.500 -8,6z" fill="#a9c4e6" stroke="#2f5f9f" stroke-width=".9"/><path d="M2,21c4,-7 10,-13 19,-18.500" fill="none" stroke="#2f5f9f" stroke-width=".9"/><path d="M8,13l7,-1M11,10l6,-1M14,7l4,-.5" stroke="#5f86b8" stroke-width=".7"/><use href="#bplus" x="14" y="14"/></svg>
<svg class="ic" style="left:16.0px;top:267.0px" viewBox="0 0 24 24"><path d="M1.500,1.500c10,1 17,5 21.500,12l-9,2l1,3.500l-13.500,3c4,-7 4,-14 0,-20.500z" fill="#5b8fd0" stroke="#1f3f68" stroke-width="1"/><path d="M6,3.500c3,6 3,11 1,16.500M11,5.500c2.500,5 2.500,9 1.500,13M16,8.500c1.500,3 2,5 1.500,7" fill="none" stroke="#1f3f68" stroke-width=".8"/><use href="#bplus" x="14" y="14"/></svg>
<svg class="ic" style="left:16.0px;top:305.0px" viewBox="0 0 24 24"><ellipse cx="11" cy="10.500" rx="11" ry="9.500" fill="#8fb0dc" stroke="#4a72a8" stroke-width=".9"/><path d="M3,5c3,1 4,3 3,5s-3,2 -4,1M9,3c3,0 6,1 7,3s-3,3 -3,5s3,2 5,1s3,-4 4,-3M6,15c2,-1 5,0 6,2s-1,3 -3,3" fill="none" stroke="#2f4f7f" stroke-width="1.300"/><path d="M0,10.500h22M11,1v19" stroke="#dfe9f6" stroke-width=".6"/><use href="#bplus" x="14" y="14"/></svg>
<svg class="ic" style="left:16.0px;top:343.0px" viewBox="0 0 24 24"><ellipse cx="11" cy="10.500" rx="11" ry="9.500" fill="#1f3f68" stroke="#14294a" stroke-width=".9"/><path d="M0,10.500h22M1.500,6h19M1.500,15h19M11,1v19M11,1c-5,3 -5,16 0,19M11,1c5,3 5,16 0,19" fill="none" stroke="#dfe9f6" stroke-width="1.100"/><rect x="7" y="6.500" width="4" height="4" fill="#6b9bd2"/><rect x="11" y="11" width="4.500" height="4" fill="#6b9bd2"/><use href="#bplus" x="14" y="14"/></svg>
<svg class="ic" style="left:16.0px;top:381.0px" viewBox="0 0 24 24"><ellipse cx="11" cy="10.500" rx="11" ry="9.500" fill="#dfe9f8" stroke="#6b9bd2" stroke-width=".9"/><path d="M0,10.500h22M1.500,6h19M1.500,15h19M11,1c-5,3 -5,16 0,19M11,1c5,3 5,16 0,19" fill="none" stroke="#8fb0dc" stroke-width=".8"/><path d="M4.500,5.500l5,11l4.500,-11l3.500,-.5" fill="none" stroke="#222" stroke-width="1.100"/><g fill="#fff" stroke="#222" stroke-width=".8"><circle cx="4.500" cy="5.500" r="1.300"/><circle cx="9.500" cy="16.500" r="1.300"/><circle cx="14" cy="5.500" r="1.300"/><circle cx="17.500" cy="5" r="1.300"/></g><use href="#bplus" x="14" y="14"/></svg>
<svg class="ic" style="left:16.0px;top:419.5px" viewBox="0 0 24 24"><path d="M9.500,2c4,0 6.500,3 5.500,8c-1,4 -4,7 -8.500,8.500l-.8,-1.500c3,-1.500 5,-3.500 5,-6c-3,1 -5.500,-1 -5.500,-4c0,-3 2,-5 4.300,-5z" fill="#5b8fd0" stroke="#2f5f9f" stroke-width=".8"/><use href="#bplus" x="14" y="14"/></svg>
<svg class="ic" style="left:16.0px;top:457.5px" viewBox="0 0 24 24"><path d="M1,22.500c2,-8 7,-16 21,-21c-1,6 -5,12 -13,15c-3,1 -5,2.500 -8,6z" fill="#a9c4e6" stroke="#2f5f9f" stroke-width=".9"/><path d="M2,21c4,-7 10,-13 19,-18.500" fill="none" stroke="#2f5f9f" stroke-width=".9"/><path d="M8,13l7,-1M11,10l6,-1M14,7l4,-.5" stroke="#5f86b8" stroke-width=".7"/><use href="#bstar" x="14" y="14"/></svg>
<svg class="ic" style="left:16.0px;top:496.0px" viewBox="0 0 24 24"><rect x="1.500" y="1.500" width="19" height="19" fill="#ededed" stroke="#b4b4b4" stroke-width=".9"/><g opacity=".6"><rect x="14" y="14" width="9.500" height="9.500" rx="2" fill="#ee6a7a"/><path d="M15.800,18.750h6" stroke="#fff" stroke-width="1.800"/></g></svg>
<svg class="abs" style="left:41.5px;top:472.5px" width="8" height="6" viewBox="0 0 8 6"><path d="M0,0h8l-4,6z" fill="#6a6a6a"/></svg>
<svg class="abs" style="left:12px;top:531px" width="38" height="7" viewBox="0 0 38 7"><use href="#dots" x="0" y="0"/><use href="#dots" x="3" y="3"/><use href="#dots" x="6" y="0"/><use href="#dots" x="9" y="3"/><use href="#dots" x="12" y="0"/><use href="#dots" x="15" y="3"/><use href="#dots" x="18" y="0"/><use href="#dots" x="21" y="3"/><use href="#dots" x="24" y="0"/><use href="#dots" x="27" y="3"/><use href="#dots" x="30" y="0"/><use href="#dots" x="33" y="3"/></svg>
<svg class="abs" style="left:54.5px;top:101.500px" width="34" height="16" viewBox="0 0 34 16"><circle cx="7.500" cy="7.500" r="6.800" fill="#3c3c3c"/><path d="M4.800,4.800l5.400,5.400M10.200,4.800l-5.400,5.400" stroke="#fff" stroke-width="2"/><circle cx="27.500" cy="7.500" r="6.800" fill="#3c3c3c"/><rect x="24.300" y="6.500" width="4.800" height="3.800" fill="none" stroke="#fff" stroke-width="1.100"/><path d="M26,6.500v-1.700h4.800v3.700h-1.700" fill="none" stroke="#fff" stroke-width="1.100"/></svg>

<svg class="map" width="1451" height="930" viewBox="0 0 1451 930" style="left:472px;top:98px">
<rect width="1451" height="930" fill="#fff"/>
<g fill="#defc42" stroke="#000" stroke-width="0.85" stroke-linejoin="miter">
<path d="M198.0,950.0 211.6,929.6 341.3,730.9 339.5,647.9 362.9,623.8 333.6,541.2 337.4,516.3 373.8,484.6 323.5,417.2 380.7,368.9 376.3,352.3 518.2,185.7 879.7,71.2 930.6,9.7 1057.3,29.2 1075.4,82.1 1159.2,0.0 1188.0,-28.0 1228.0,-26.0 1253.9,-4.5 1410.4,122.3 1330.7,207.2 1254.6,150.5 1132.0,282.0 1248.7,413.0 1170.8,495.6 1089.5,527.0 926.0,588.3 914.2,598.9 724.6,727.4 661.0,775.7 623.5,802.0 586.2,833.1 557.0,864.3 530.0,899.6 511.4,929.7 496.0,950.0 500.0,950.0 474.0,929.6 365.4,844.4 313.3,929.6 300.0,950.0Z"/>
<path d="M606.4,952.0 606.9,898.5 636.0,870.5 628.7,845.6 731.7,808.8 828.0,774.0 948.0,745.0 1022.9,788.0 1071.8,925.6 1063.0,952.0Z"/>
</g>
<path d="M474.8,917.5 503.9,915.8 502.2,886.6 531.4,884.9 529.6,855.8 558.8,854.1 557.1,824.9 586.2,823.2 584.5,794.1 613.7,792.4 611.9,763.2 641.1,761.5 639.4,732.4 668.5,730.7 697.7,729.0 726.8,727.3 755.9,725.6 757.6,754.7 699.4,758.1 701.1,787.3 730.2,785.5 731.9,814.7 733.6,843.8 762.8,842.1 764.5,871.3 735.3,873.0 706.2,874.7 704.5,845.5 675.3,847.2 677.1,876.4 647.9,878.1 649.6,907.2 678.8,905.5 680.5,934.7 709.6,933.0 709.8,936.0 943.7,936.0 942.7,919.3 941.0,890.1 970.2,888.4 971.9,917.6 1001.0,915.9 1002.2,936.0 1060.7,936.0 1059.3,912.5 1057.6,883.3 1055.9,854.2 1026.7,855.9 997.6,857.6 995.9,828.5 994.2,799.3 965.0,801.0 963.3,771.9 961.6,742.7 959.9,713.6 930.8,715.3 929.1,686.2 987.4,682.8 1016.5,681.0 1018.2,710.2 989.1,711.9 990.8,741.0 1019.9,739.3 1021.6,768.5 1050.7,766.8 1052.4,795.9 1054.2,825.0 1083.3,823.3 1085.0,852.5 1114.1,850.8 1115.8,879.9 1117.6,909.0 1119.1,936.0 1457.0,936.0 1457.0,772.2 1431.3,773.7 1429.6,744.6 1427.8,715.4 1426.1,686.3 1455.3,684.6 1457.0,684.5 1457.0,655.2 1453.6,655.4 1451.9,626.3 1450.2,597.1 1448.5,568.0 1457.0,567.5 1457.0,509.0 1445.0,509.7 1415.9,511.4 1386.8,513.1 1388.5,542.3 1330.2,545.7 1301.0,547.4 1271.9,549.1 1270.2,520.0 1241.1,521.7 1182.8,525.1 1153.6,526.8 1124.5,528.5 1126.2,557.7 1155.4,555.9 1157.1,585.1 1186.2,583.4 1187.9,612.5 1217.1,610.8 1246.2,609.1 1275.3,607.4 1304.5,605.7 1306.2,634.8 1335.3,633.1 1337.0,662.3 1307.9,664.0 1309.6,693.1 1280.4,694.8 1251.3,696.5 1253.0,725.6 1254.7,754.8 1256.4,783.9 1227.3,785.6 1225.6,756.5 1223.9,727.4 1222.2,698.2 1193.0,699.9 1163.9,701.6 1162.2,672.5 1160.5,643.4 1131.3,645.1 1129.6,615.9 1127.9,586.8 1098.8,588.5 1069.6,590.2 1040.5,591.9 1011.4,593.6 982.2,595.3 923.9,598.8 894.8,600.5 865.7,602.2 864.0,573.0 834.8,574.7 833.1,545.6 862.3,543.9 891.4,542.2 920.5,540.5 917.1,482.2 915.4,453.1 944.5,451.3 942.8,422.2 972.0,420.5 970.3,391.4 999.4,389.6 1028.5,387.9 1057.7,386.2 1056.0,357.1 1085.1,355.4 1083.4,326.3 1081.7,297.1 1110.8,295.4 1140.0,293.7 1136.6,235.4 1134.9,206.3 1133.2,177.1 1162.3,175.4 1164.0,204.6 1193.1,202.9 1194.9,232.0 1224.0,230.3 1222.3,201.2 1220.6,172.0 1191.4,173.7 1189.7,144.6 1188.0,115.4 1217.2,113.7 1215.5,84.6 1244.6,82.9 1273.7,81.2 1302.9,79.5 1301.2,50.3 1330.3,48.6 1328.6,19.5 1357.7,17.8 1356.3,-6.0 1264.4,-6.0 1239.5,-4.5 1241.2,24.6 1212.0,26.3 1210.3,-2.8 1181.2,-1.1 1182.9,28.0 1184.6,57.2 1155.5,58.9 1157.2,88.0 1128.0,89.7 1098.9,91.4 1069.8,93.1 1071.5,122.3 1073.2,151.4 1044.0,153.1 1045.7,182.3 1016.6,184.0 1018.3,213.1 989.2,214.8 990.9,244.0 961.7,245.7 932.6,247.4 934.3,276.5 905.2,278.2 876.0,279.9 877.7,309.1 848.6,310.8 850.3,339.9 821.2,341.6 792.0,343.3 793.7,372.5 795.4,401.6 797.1,430.7 768.0,432.5 738.9,434.2 680.6,437.6 651.4,439.3 622.3,441.0 624.0,470.1 653.2,468.4 682.3,466.7 684.0,495.9 654.9,497.6 656.6,526.7 627.4,528.4 598.3,530.1 600.0,559.3 601.7,588.4 572.6,590.1 574.3,619.3 545.1,621.0 516.0,622.7 517.7,651.8 488.6,653.5 490.3,682.7 461.1,684.4 462.8,713.5 466.3,771.8 437.1,773.5 438.8,802.6 409.7,804.3 380.5,806.0 384.0,864.3 354.8,866.0 356.5,895.2 358.2,924.3 329.1,926.0 329.7,936.0 475.9,936.0ZM1333.6,604.0 1362.7,602.3 1391.9,600.6 1393.6,629.7 1395.3,658.8 1366.2,660.5 1364.4,631.4 1335.3,633.1ZM1227.4,288.6 1256.5,286.9 1258.3,316.0 1287.4,314.3 1289.1,343.4 1290.8,372.6 1292.5,401.7 1321.7,400.0 1323.4,429.1 1352.5,427.4 1350.8,398.3 1379.9,396.6 1381.6,425.7 1383.3,454.9 1412.5,453.1 1441.6,451.4 1457.0,450.5 1457.0,362.8 1436.5,364.0 1434.8,334.9 1405.7,336.6 1376.5,338.3 1347.4,340.0 1349.1,369.1 1319.9,370.9 1318.2,341.7 1316.5,312.6 1314.8,283.4 1313.1,254.3 1284.0,256.0 1254.8,257.7 1225.7,259.4ZM1364.6,134.3 1335.4,136.0 1337.1,165.2 1338.8,194.3 1368.0,192.6 1366.3,163.5 1395.4,161.8 1424.6,160.0 1422.8,130.9 1421.1,101.8 1450.3,100.1 1448.6,70.9 1446.9,41.8 1417.7,43.5 1419.4,72.6 1390.3,74.3 1392.0,103.5 1362.9,105.2ZM1004.5,477.1 1006.2,506.2 1035.4,504.5 1064.5,502.8 1062.8,473.7 1092.0,471.9 1090.2,442.8 1088.5,413.7 1059.4,415.4 1030.3,417.1 1032.0,446.2 1002.8,447.9 973.7,449.6 975.4,478.8ZM456.1,99.9 485.3,98.2 483.6,69.0 512.7,67.3 514.4,96.4 543.5,94.7 541.8,65.6 541.8,65.6 540.1,36.5 569.3,34.8 567.6,5.6 596.7,3.9 596.1,-6.0 537.6,-6.0 538.4,7.3 509.3,9.0 511.0,38.2 481.9,39.9 483.6,69.0 454.4,70.7ZM279.6,81.0 281.3,110.1 283.0,139.2 284.7,168.4 313.8,166.7 315.6,195.8 317.3,225.0 319.0,254.1 377.2,250.7 406.4,249.0 403.0,190.7 432.1,189.0 430.4,159.9 430.4,159.8 428.7,130.7 399.6,132.4 399.5,132.4 370.4,134.1 368.7,105.0 397.8,103.3 396.1,74.2 396.1,74.1 394.4,45.0 365.3,46.7 363.6,17.6 334.4,19.3 333.0,-6.0 274.5,-6.0 276.2,22.7 305.3,21.0 307.0,50.1 277.9,51.8 279.6,81.0ZM17.3,96.3 19.0,125.5 20.7,154.6 22.5,183.8 24.2,212.9 -5.0,214.6 -3.3,243.7 -1.6,272.9 0.1,302.0 29.3,300.3 31.0,329.5 1.8,331.2 3.6,360.3 5.3,389.4 7.0,418.6 -6.0,419.4 -6.0,682.5 22.3,680.9 20.6,651.7 18.9,622.6 17.2,593.4 15.5,564.3 44.6,562.6 42.9,533.4 72.1,531.7 70.4,502.6 68.7,473.5 67.0,444.3 65.2,415.2 36.1,416.9 34.4,387.7 63.5,386.0 92.7,384.3 94.4,413.5 123.5,411.8 125.2,440.9 154.4,439.2 152.7,410.1 151.0,380.9 149.3,351.8 120.1,353.5 118.4,324.3 89.3,326.1 87.6,296.9 58.4,298.6 56.7,269.5 85.8,267.8 115.0,266.1 113.3,236.9 84.1,238.6 82.4,209.5 80.7,180.4 109.9,178.6 139.0,176.9 137.3,147.8 166.4,146.1 164.7,117.0 163.0,87.8 133.9,89.5 132.2,60.4 161.3,58.7 190.5,57.0 188.8,27.8 217.9,26.1 216.2,-3.0 187.0,-1.3 186.8,-6.0 40.6,-6.0 41.3,7.2 43.1,36.4 44.8,65.5 15.6,67.2ZM108.2,149.5 106.5,120.4 135.6,118.7 137.3,147.8ZM73.8,560.9 102.9,559.2 132.1,557.5 161.2,555.7 190.3,554.0 192.0,583.2 221.2,581.5 222.9,610.6 193.7,612.3 164.6,614.0 166.3,643.2 137.2,644.9 138.9,674.0 168.0,672.3 169.7,701.4 171.4,730.6 173.1,759.7 202.3,758.0 231.4,756.3 229.7,727.2 258.9,725.5 288.0,723.8 286.3,694.6 315.4,692.9 313.7,663.8 284.6,665.5 282.9,636.3 281.2,607.2 279.5,578.1 277.8,548.9 248.6,550.6 246.9,521.5 217.8,523.2 188.6,524.9 186.9,495.8 157.8,497.5 156.1,468.3 126.9,470.0 128.6,499.2 99.5,500.9 101.2,530.0 72.1,531.7Z" fill="#c87318" stroke="#000" stroke-width="0.85" fill-rule="evenodd"/>
<path d="M414.6,934.0 417.3,929.1 420.7,924.6 424.7,920.7 429.3,917.5 434.3,915.1 439.3,913.6 440.2,908.4 442.1,903.2 444.7,898.2 448.1,893.7 452.1,889.9 456.7,886.7 461.8,884.2 466.7,882.7 467.7,877.6 469.5,872.3 472.1,867.4 475.5,862.9 479.6,859.0 484.2,855.8 489.2,853.4 494.2,851.9 495.1,846.8 496.9,841.5 499.6,836.5 503.0,832.0 507.0,828.2 511.6,825.0 516.6,822.5 521.6,821.0 522.5,815.9 524.4,810.6 527.0,805.7 530.4,801.2 534.4,797.3 539.0,794.1 544.1,791.7 549.0,790.2 550.0,785.1 551.8,779.8 554.4,774.8 557.8,770.4 561.9,766.5 566.5,763.3 571.5,760.8 576.5,759.3 577.4,754.2 579.2,748.9 581.9,744.0 585.3,739.5 589.3,735.6 593.9,732.4 598.9,730.0 603.9,728.5 604.8,723.4 606.7,718.1 609.3,713.1 612.7,708.7 616.7,704.8 621.3,701.6 626.4,699.1 631.7,697.5 637.3,696.7 753.8,689.9 759.4,690.0 765.0,691.0 770.3,692.8 775.2,695.5 779.7,698.9 783.6,702.9 786.8,707.5 789.2,712.6 790.8,717.9 791.6,723.5 793.3,752.6 793.2,758.2 792.2,763.7 790.4,769.0 787.7,774.0 784.3,778.4 780.3,782.3 775.7,785.5 770.7,788.0 766.2,789.3 767.2,806.7 771.8,807.6 777.1,809.4 782.0,812.0 786.5,815.4 790.4,819.5 793.6,824.1 796.0,829.1 797.7,834.5 798.4,840.0 800.1,869.2 800.0,874.8 799.0,880.3 797.2,885.6 794.5,890.5 791.2,895.0 787.1,898.9 782.5,902.1 777.5,904.5 772.1,906.1 766.6,906.9 735.7,908.7 737.2,910.3 740.4,914.9 742.9,919.9 744.2,924.4 796.6,921.3 802.2,921.4 807.8,922.4 813.1,924.2 818.0,926.9 822.5,930.3 826.4,934.3 827.5,936.0 907.9,936.0 905.4,892.2 905.5,886.6 906.5,881.1 908.3,875.8 910.9,870.9 914.3,866.4 918.4,862.5 923.0,859.3 928.0,856.9 933.4,855.3 938.9,854.5 961.5,853.2 960.6,836.4 956.0,835.6 950.7,833.7 945.8,831.1 941.3,827.7 937.4,823.7 934.2,819.1 931.8,814.0 930.1,808.7 929.4,803.1 926.3,750.7 921.7,749.9 916.4,748.0 911.5,745.4 907.0,742.0 903.2,738.0 899.9,733.4 897.5,728.3 895.9,723.0 895.1,717.4 893.4,688.3 893.5,682.7 894.5,677.1 896.3,671.8 899.0,666.9 902.4,662.4 906.4,658.5 911.0,655.3 916.1,652.9 921.4,651.3 927.0,650.5 1014.4,645.4 1020.0,645.5 1025.5,646.5 1030.8,648.3 1035.8,651.0 1040.2,654.4 1044.1,658.4 1047.3,663.0 1049.8,668.0 1051.4,673.4 1052.1,679.0 1053.8,708.1 1053.7,713.7 1052.7,719.2 1051.5,722.9 1053.2,726.3 1054.7,731.3 1059.8,732.2 1065.1,734.0 1070.0,736.7 1074.5,740.1 1078.4,744.1 1081.6,748.7 1084.0,753.7 1085.6,759.1 1086.4,764.7 1087.8,787.9 1092.3,788.8 1097.6,790.6 1102.6,793.2 1107.0,796.6 1110.9,800.7 1114.1,805.3 1116.6,810.3 1118.1,815.3 1123.2,816.2 1128.5,818.0 1133.4,820.7 1137.9,824.1 1141.8,828.1 1145.0,832.7 1147.4,837.7 1149.0,843.1 1149.8,848.7 1154.9,936.0 1436.7,936.0 1437.9,932.5 1440.6,927.5 1444.0,923.1 1448.5,918.9 1443.5,915.2 1439.6,911.2 1436.4,906.6 1434.0,901.5 1432.3,896.2 1431.6,890.6 1428.2,832.3 1428.3,826.7 1429.3,821.2 1431.1,815.9 1433.7,811.0 1435.1,809.2 1427.7,809.2 1422.2,808.2 1416.9,806.4 1412.0,803.8 1407.5,800.4 1403.6,796.3 1400.4,791.7 1398.0,786.7 1396.4,781.3 1395.6,775.8 1390.9,694.9 1368.2,696.2 1362.6,696.1 1357.1,695.1 1353.5,693.8 1350.0,695.5 1345.1,697.0 1344.1,702.1 1342.3,707.4 1339.7,712.4 1336.3,716.8 1332.2,720.7 1327.6,723.9 1322.6,726.4 1317.2,728.0 1311.7,728.8 1289.1,730.1 1292.1,781.8 1292.0,787.4 1291.0,793.0 1289.1,798.3 1286.5,803.2 1283.1,807.7 1279.1,811.6 1274.5,814.8 1269.4,817.2 1264.1,818.8 1258.5,819.6 1229.4,821.3 1223.8,821.2 1218.3,820.2 1213.0,818.4 1208.0,815.7 1203.5,812.3 1199.7,808.3 1196.5,803.7 1194.0,798.6 1192.4,793.3 1191.6,787.7 1188.6,736.0 1166.0,737.3 1160.4,737.2 1154.9,736.2 1149.6,734.4 1144.6,731.7 1140.1,728.3 1136.3,724.3 1133.1,719.7 1130.6,714.6 1129.0,709.3 1128.2,703.7 1126.9,680.4 1122.3,679.6 1117.0,677.8 1112.1,675.1 1107.6,671.8 1103.7,667.7 1100.5,663.1 1098.1,658.1 1096.4,652.7 1095.7,647.2 1094.3,624.5 867.8,637.8 862.2,637.7 856.6,636.7 851.3,634.9 846.4,632.2 841.9,628.9 838.0,624.8 834.8,620.2 832.4,615.2 830.9,610.2 825.8,609.3 820.5,607.5 815.5,604.8 811.1,601.4 807.2,597.4 804.0,592.8 801.6,587.7 799.9,582.4 799.2,576.8 797.5,547.7 797.6,542.1 798.6,536.6 800.4,531.3 803.0,526.3 806.4,521.9 810.5,518.0 815.1,514.8 820.1,512.3 825.5,510.7 831.0,509.9 882.8,506.9 879.7,455.1 879.9,449.5 880.8,444.0 882.7,438.7 885.3,433.8 888.7,429.3 892.8,425.4 897.4,422.2 902.4,419.8 907.4,418.3 908.3,413.2 910.1,407.9 912.8,402.9 916.1,398.5 920.2,394.6 924.8,391.4 929.8,388.9 934.8,387.4 935.7,382.3 937.6,377.0 940.2,372.1 943.6,367.6 947.6,363.7 952.2,360.5 957.3,358.1 962.6,356.5 968.2,355.7 1020.6,352.6 1021.4,348.1 1023.3,342.8 1025.9,337.8 1029.3,333.4 1033.3,329.5 1037.9,326.3 1043.0,323.8 1047.4,322.5 1046.0,299.2 1046.2,293.6 1047.1,288.1 1049.0,282.8 1051.6,277.8 1055.0,273.4 1059.1,269.5 1063.7,266.3 1068.7,263.8 1074.1,262.2 1079.6,261.4 1102.2,260.1 1097.5,177.4 1095.8,179.0 1091.2,182.2 1086.2,184.7 1081.2,186.2 1080.3,191.3 1078.5,196.6 1075.8,201.5 1072.4,206.0 1068.4,209.9 1063.8,213.1 1058.7,215.5 1053.8,217.0 1052.9,222.1 1051.0,227.4 1048.4,232.4 1045.0,236.8 1041.0,240.7 1036.4,243.9 1031.3,246.4 1026.3,247.9 1025.4,253.0 1023.6,258.3 1021.0,263.2 1017.6,267.7 1013.5,271.6 1008.9,274.8 1003.9,277.2 998.5,278.8 993.0,279.6 969.7,281.0 968.9,285.5 967.0,290.8 964.4,295.8 961.0,300.2 957.0,304.1 952.4,307.3 947.3,309.8 941.9,311.4 936.4,312.2 913.1,313.5 912.3,318.1 910.5,323.4 907.8,328.3 904.4,332.8 900.4,336.7 895.8,339.9 890.7,342.3 885.8,343.8 884.9,348.9 883.0,354.2 880.4,359.2 877.0,363.6 873.0,367.5 868.4,370.7 863.3,373.2 857.9,374.8 852.4,375.6 829.8,376.9 832.8,428.7 832.7,434.3 831.7,439.8 829.9,445.1 827.2,450.0 823.8,454.5 819.8,458.4 815.2,461.6 810.2,464.0 804.8,465.6 799.2,466.4 718.3,471.1 719.7,493.8 719.5,499.4 718.6,504.9 716.7,510.2 714.1,515.1 710.7,519.6 706.7,523.5 702.1,526.7 697.0,529.1 692.0,530.6 691.1,535.7 689.3,541.0 686.6,546.0 683.3,550.4 679.2,554.3 674.6,557.5 669.6,560.0 664.2,561.6 658.7,562.4 636.0,563.7 637.4,586.3 637.3,591.9 636.3,597.4 634.4,602.7 631.8,607.7 628.4,612.1 624.4,616.0 619.8,619.2 614.7,621.7 609.7,623.2 608.8,628.3 607.0,633.6 604.3,638.5 601.0,643.0 596.9,646.9 592.3,650.1 587.3,652.5 581.9,654.1 576.4,654.9 553.1,656.3 552.3,660.8 550.4,666.1 547.8,671.1 544.4,675.5 540.4,679.4 535.8,682.6 530.7,685.1 525.7,686.6 524.8,691.7 523.0,697.0 520.3,701.9 517.0,706.4 512.9,710.3 508.3,713.5 503.3,715.9 498.8,717.3 501.9,769.7 501.8,775.3 500.8,780.8 499.0,786.1 496.3,791.1 492.9,795.5 488.9,799.4 484.3,802.6 479.3,805.0 474.3,806.6 473.4,811.7 471.5,817.0 468.9,821.9 465.5,826.4 461.5,830.3 456.9,833.5 451.8,835.9 446.5,837.5 440.9,838.3 418.3,839.6 419.6,862.2 419.5,867.8 418.5,873.4 416.7,878.7 414.0,883.6 410.6,888.1 406.6,891.9 402.0,895.1 397.0,897.6 392.5,898.9 393.9,922.2 393.8,927.8 392.8,933.3 391.9,936.0 413.9,936.0ZM1110.5,149.5 1115.1,146.3 1120.2,143.9 1125.5,142.2 1131.1,141.5 1153.7,140.1 1152.7,124.0 1107.5,126.7 1108.8,151.2ZM1412.9,571.8 1412.8,568.3 1411.1,569.9 1410.7,570.2ZM1244.3,571.8 1241.1,567.2 1238.6,562.1 1237.3,557.7 1212.3,559.1 1213.8,560.7 1217.0,565.3 1219.5,570.4 1220.8,574.8 1245.8,573.3ZM1416.9,417.1 1433.0,416.2 1432.0,399.4 1427.5,398.6 1422.2,396.7 1417.2,394.1 1415.3,392.7ZM341.6,73.4 337.4,68.9 333.7,73.9 329.7,77.7 325.1,81.0 320.0,83.4 315.6,84.7 318.3,131.3 322.9,132.1 328.2,134.0 333.1,136.6 335.0,138.0 333.0,107.1 333.2,101.5 334.1,96.0 336.0,90.7 338.6,85.7 342.0,81.3 346.5,77.1ZM352.5,216.4 368.6,215.4 367.3,192.8 367.4,187.2 368.4,181.7 370.2,176.4 372.9,171.4 374.2,169.7 366.9,169.7 361.4,168.7 356.1,166.9 351.1,164.2 349.3,162.8ZM245.5,638.2 240.9,641.4 235.9,643.9 230.5,645.5 225.0,646.3 201.7,647.6 200.9,652.2 199.6,655.8 201.3,659.3 202.9,664.7 203.7,670.2 205.5,701.1 207.1,699.6 211.7,696.3 216.7,693.9 222.1,692.3 227.6,691.5 250.9,690.1 251.7,685.6 253.0,681.9 251.3,678.5 249.7,673.1 248.9,667.6 247.1,636.7ZM-2.5,533.5 2.5,531.0 7.5,529.5 8.4,524.4 10.2,519.1 12.9,514.2 16.2,509.7 20.3,505.8 24.9,502.6 29.9,500.2 34.4,498.8 31.6,452.3 27.1,451.4 23.4,450.2 20.0,451.9 15.0,453.4 14.1,458.5 12.3,463.8 9.6,468.7 6.2,473.2 2.2,477.1 -2.4,480.3 -6.0,482.0 -6.0,535.9ZM61.4,350.4 63.2,350.3 61.3,348.2 59.7,350.5ZM58.1,152.7 62.7,149.5 67.7,147.1 72.2,145.7 70.8,122.5 70.9,116.9 71.9,111.3 73.7,106.0 76.4,101.1 79.8,96.6 83.8,92.7 88.4,89.5 93.4,87.1 97.9,85.8 96.5,62.5 96.6,56.9 97.6,51.3 99.5,46.1 102.1,41.1 105.5,36.6 109.5,32.8 114.1,29.6 119.2,27.1 124.5,25.5 130.1,24.7 153.4,23.4 154.2,18.8 155.5,15.2 153.8,11.7 152.2,6.3 151.4,0.8 151.0,-6.0 76.4,-6.0 80.4,63.4 80.3,69.0 79.3,74.5 77.5,79.8 74.8,84.8 71.5,89.2 67.4,93.1 62.8,96.3 57.8,98.8 53.3,100.1 56.5,154.2Z" fill="#3d8bf8" stroke="#000" stroke-width="0.85" fill-rule="evenodd"/>
<g fill="none" stroke="#000" stroke-width="0.8">
<path d="M1032.8,416.4 1050.9,394.5 1068.1,407.1 1061.2,414.9"/>
<path d="M567.5,454.9 586.2,441.4 589.3,433.1 585.1,424.8 596.5,418.2 599.6,419.6 616.3,440.4 582.0,470.1 567.5,454.9"/>
</g>
<g fill="none" stroke="#7650a8" stroke-width="0.75" stroke-linejoin="round">
<path d="M501.0,238.5 555.4,186.6"/>
<path d="M611.1,188.2 624.6,228.1 654.2,218.3"/>
<path d="M632.9,182.0 654.2,218.3 669.2,240.1 684.1,270.2 708.0,295.1"/>
<path d="M646.8,203.4 700.3,187.2 708.0,211.1"/>
<path d="M669.2,240.1 708.0,228.1"/>
<path d="M658.4,281.0 684.1,270.2 708.0,248.4"/>
<path d="M540.1,316.5 591.3,265.7 602.8,258.4 606.3,260.9 607.9,306.5 604.8,312.8 589.3,328.3 573.3,342.2"/>
<path d="M349.5,402.0 388.5,371.3 445.0,323.2 452.9,319.4 473.6,353.9 496.9,389.6 502.1,402.0"/>
<path d="M388.5,371.3 413.9,402.0"/>
<path d="M417.0,402.0 473.6,353.9"/>
<path d="M481.3,402.0 490.7,394.8 497.3,393.7"/>
<path d="M615.2,357.4 639.1,378.2 663.0,402.0"/>
<path d="M607.9,402.0 639.1,378.2"/>
<path d="M646.3,384.4 676.4,356.4 708.0,327.3"/>
<path d="M676.4,356.4 708.0,386.5"/>
<path d="M409.3,196.9 413.9,186.2"/>
<path d="M708.0,325.2 712.2,323.2 730.8,306.1 754.7,276.4 786.9,240.1 802.4,188.2 799.3,182.0"/>
<path d="M724.6,182.0 754.1,273.3 754.7,276.4"/>
<path d="M755.7,182.0 764.0,213.1 770.3,223.5 779.6,232.9 786.9,240.1"/>
<path d="M745.4,242.2 779.6,232.9"/>
<path d="M802.4,188.2 822.2,182.0"/>
<path d="M824.2,182.0 847.1,192.0"/>
<path d="M786.9,240.1 844.0,296.2"/>
<path d="M769.2,292.0 805.6,259.8 862.6,199.6 867.8,199.0 880.3,210.0 888.6,226.6 893.8,244.3"/>
<path d="M732.9,402.0 791.0,350.1 805.6,336.6 866.8,272.3 895.9,241.2 907.3,230.8 926.0,224.6 950.9,220.8 971.6,224.6 984.1,232.9 1019.4,264.0 1048.4,286.8 1075.4,305.5 1108.0,321.1"/>
<path d="M917.7,196.1 931.8,215.6"/>
<path d="M946.7,202.1 957.1,211.1 960.2,216.3 960.2,220.8"/>
<path d="M756.2,281.2 805.6,336.6"/>
<path d="M730.8,306.1 783.8,354.3"/>
<path d="M712.2,323.2 763.0,376.1"/>
<path d="M782.7,281.6 800.4,299.3"/>
<path d="M822.2,318.0 838.8,335.6 840.8,339.8"/>
<path d="M866.8,272.3 878.2,283.7 915.6,314.8 928.0,327.3 957.1,354.3 975.8,373.0 1002.8,402.0"/>
<path d="M793.1,348.1 830.5,389.6 840.8,402.0"/>
<path d="M815.9,402.0 830.5,389.6 886.5,342.9 913.5,314.8 977.8,258.8"/>
<path d="M928.0,327.3 946.7,299.3 967.5,312.8 977.8,313.8 984.1,316.9"/>
<path d="M957.1,354.3 984.1,316.9 1020.4,265.0"/>
<path d="M1000.7,246.3 1053.6,182.0"/>
<path d="M1038.0,275.4 1070.2,235.6 1098.2,198.6 1108.0,188.2"/>
<path d="M1070.2,235.6 1082.7,247.4 1060.9,264.0 1053.6,256.7"/>
<path d="M1002.8,402.0 1028.7,365.7 1075.4,305.5"/>
<path d="M1401.6,182.0 1397.5,211.0 1393.4,219.2 1385.1,223.4 1327.2,233.3 1314.8,240.9 1303.4,253.3 1300.3,264.7 1297.2,316.4 1290.0,343.3 1272.4,402.0"/>
<path d="M1108.0,188.2 1139.0,215.1 1149.4,223.4 1161.8,221.3 1174.2,211.0 1192.8,186.1 1189.7,182.0"/>
<path d="M1108.0,322.6 1128.7,333.0 1159.7,359.8 1196.9,402.0"/>
<path d="M1117.3,402.0 1126.6,376.4 1134.9,370.2 1143.2,376.4 1156.6,391.9 1165.9,402.0"/>
<path d="M1145.2,402.0 1156.6,391.9"/>
<path d="M308.0,519.9 335.0,525.5 359.9,534.8 374.4,538.6 380.7,538.0 391.0,531.7 408.7,516.2 466.8,468.4 510.4,433.1 515.6,431.1 521.8,434.2"/>
<path d="M356.8,451.8 413.9,402.0"/>
<path d="M349.5,402.0 335.0,412.4 331.2,416.5 331.9,422.8 356.8,451.8 381.7,484.0 408.7,516.2 442.9,558.7"/>
<path d="M381.7,484.0 440.8,436.3 480.3,402.0"/>
<path d="M413.9,402.0 440.8,436.3 466.8,468.4 491.7,499.6 515.6,527.6 543.6,561.8 573.7,596.1 594.5,622.0"/>
<path d="M503.1,402.0 517.7,426.9 536.3,456.0 545.7,464.3"/>
<path d="M491.7,499.6 526.0,485.0 538.4,474.7 545.7,464.3 557.1,443.5 564.4,435.2 596.5,411.3 611.1,402.0"/>
<path d="M442.9,558.7 411.8,578.4 391.0,593.0 385.2,599.2 385.8,605.4 397.3,622.0"/>
<path d="M442.9,558.7 455.4,545.2 480.3,509.9 491.7,499.6"/>
<path d="M408.7,622.0 515.6,527.6"/>
<path d="M474.1,622.0 521.8,580.5 543.6,561.8 589.3,522.4 631.8,487.1 646.3,473.6 679.6,444.6 708.0,421.7"/>
<path d="M521.8,580.5 555.0,622.0"/>
<path d="M546.3,504.3 615.2,446.6"/>
<path d="M589.3,522.4 598.6,534.8 614.2,556.6 636.0,582.6 658.8,603.3 673.3,622.0"/>
<path d="M631.8,487.1 656.7,515.1 673.3,539.0 696.2,563.9 708.0,578.4"/>
<path d="M596.5,411.3 615.2,435.2 633.9,417.6 631.8,413.4 621.4,402.0"/>
<path d="M679.6,422.8 694.1,436.3 708.0,448.7"/>
<path d="M577.8,601.3 614.2,556.6 648.4,518.2"/>
<path d="M636.0,582.6 606.9,609.6 594.5,622.0"/>
<path d="M658.8,603.3 696.2,563.9 708.0,551.5"/>
<path d="M594.5,429.0 598.6,427.9 604.8,433.1 606.9,438.3 587.2,459.1 582.0,460.1 578.5,456.4 579.9,451.8 597.6,435.2 602.8,435.6 599.6,446.6 604.8,451.8"/>
<path d="M1002.8,402.0 936.3,490.2 888.6,551.5 836.7,622.0"/>
<path d="M955.0,402.0 938.4,418.6 907.3,462.2 882.4,499.6 832.5,559.8 786.9,622.0"/>
<path d="M708.0,449.7 753.7,491.3 799.3,534.8 834.6,568.1 858.5,591.9"/>
<path d="M708.0,576.4 749.5,622.0"/>
<path d="M708.0,420.7 759.9,473.6"/>
<path d="M811.8,402.0 782.7,432.1 765.1,464.3 755.7,487.1 753.7,491.3 708.0,536.9"/>
<path d="M753.7,402.0 781.7,431.1"/>
<path d="M708.0,424.8 730.8,406.2 726.7,402.0"/>
<path d="M849.2,463.2 882.4,499.6 907.3,526.5 920.8,539.0 934.3,541.1 959.2,540.7 977.8,546.3 985.1,544.2 984.1,539.0 971.6,533.2"/>
<path d="M942.6,540.7 943.6,526.5 948.8,520.3 955.0,507.9 936.3,491.3"/>
<path d="M955.0,507.9 971.6,512.0 978.9,515.1 976.8,519.3 972.7,517.2 972.7,512.0"/>
<path d="M888.6,551.5 907.3,567.0 906.2,574.3 894.8,588.8 890.3,597.1"/>
<path d="M856.4,426.9 874.1,441.4 905.2,464.3"/>
<path d="M856.4,464.3 890.7,422.8 907.3,402.0"/>
<path d="M869.9,478.8 915.6,414.5 923.9,402.0"/>
<path d="M921.8,408.2 938.4,418.6"/>
<path d="M1006.9,402.0 1027.7,418.6 1044.3,434.2 1060.9,438.3 1092.0,444.6 1108.0,446.6"/>
<path d="M1060.9,438.3 1050.5,478.8 1042.2,503.7"/>
<path d="M1092.0,444.6 1087.9,472.6 1077.5,517.2"/>
<path d="M1044.3,492.3 1073.3,501.6 1108.0,492.3"/>
<path d="M890.7,622.0 936.3,597.1 1108.0,536.9"/>
<path d="M1023.5,413.4 1040.1,402.0"/>
<path d="M1031.8,411.3 1050.5,402.0"/>
<path d="M1272.4,402.0 1267.2,417.5 1252.8,431.0 1243.4,439.2 1240.3,445.4"/>
<path d="M1196.9,402.0 1227.9,435.1 1240.3,445.4 1256.9,455.8 1283.8,464.0 1309.6,468.6 1335.5,466.1 1397.5,455.8 1451.3,450.0"/>
<path d="M1108.0,537.4 1139.0,527.1 1273.4,505.4 1451.3,486.8"/>
<path d="M1163.8,402.0 1194.9,436.1 1193.8,439.2"/>
<path d="M1176.2,415.4 1170.0,420.6 1166.3,427.8"/>
<path d="M1207.3,428.5 1193.8,439.2 1180.4,452.7 1174.2,462.0"/>
<path d="M1108.0,446.5 1155.6,455.8 1180.4,465.1"/>
<path d="M1155.6,455.8 1151.4,464.0 1139.0,476.4 1122.5,486.8 1108.0,493.0"/>
<path d="M1117.3,402.0 1113.8,414.4 1115.2,446.5"/>
<path d="M1145.2,402.0 1141.1,412.3 1140.1,433.0 1145.2,453.7"/>
<path d="M714.6,150.2 724.3,182.0"/>
<path d="M747.4,153.1 755.4,182.0"/>
<path d="M780.2,121.1 800.5,182.0"/>
<path d="M819.5,182.0 823.2,180.7 826.0,182.0"/>
<path d="M823.2,180.7 828.0,171.4 830.1,145.4"/>
<path d="M830.1,145.4 820.1,108.7 904.2,81.5 917.2,117.4 830.1,145.4"/>
<path d="M917.2,117.4 922.8,123.6 924.3,134.0 911.0,167.2"/>
<path d="M861.2,136.5 864.1,145.4 868.9,150.6 911.0,167.2 933.2,175.5 938.4,175.1 946.7,169.3 959.2,156.8 965.4,154.8"/>
<path d="M916.2,36.4 947.8,108.1 965.4,154.8"/>
<path d="M947.8,108.1 948.2,80.0 950.9,74.8 1015.2,33.9 1040.1,79.0 1050.5,96.6 1060.5,106.4"/>
<path d="M1029.3,86.7 1040.1,79.0"/>
<path d="M1055.8,182.0 1070.2,164.1 1108.0,116.4"/>
<path d="M1070.2,164.1 1094.4,182.0"/>
<path d="M1356.2,0.1 1378.9,23.9 1387.2,40.4 1418.2,67.3 1423.4,75.6 1422.3,83.9 1409.9,112.8 1405.8,162.4 1401.7,182.0"/>
<path d="M1108.0,115.9 1126.6,93.2 1158.7,121.1 1188.6,144.9"/>
<path d="M1116.0,182.0 1158.7,121.1 1200.0,75.6 1254.8,8.4 1261.0,0.1"/>
<path d="M1184.5,0.1 1156.6,34.6 1200.0,75.6 1231.5,102.5 1241.4,91.1 1270.3,111.8 1356.2,102.5 1364.4,106.6 1370.6,114.9 1369.6,121.1 1337.5,164.5"/>
<path d="M1242.4,0.1 1254.8,8.4"/>
<path d="M1255.9,100.4 1290.0,57.0 1296.2,54.5 1301.4,57.0 1325.1,76.6 1336.5,86.3"/>
<path d="M1273.4,81.8 1282.7,87.0 1318.9,81.4 1325.1,76.6"/>
<path d="M1239.9,108.7 1190.7,166.6 1184.1,174.4 1190.2,182.0"/>
<path d="M1306.9,107.6 1310.7,141.8 1314.8,149.0 1321.0,152.5 1345.8,150.4 1348.9,149.0 1348.3,151.7"/>
<path d="M1302.0,134.5 1359.3,124.2 1364.4,127.7"/>
<path d="M351.0,802.0 380.7,748.6 409.7,693.6 421.8,670.2 432.5,656.3 448.1,643.8 474.1,622.0"/>
<path d="M345.4,659.4 405.6,700.5"/>
<path d="M409.7,693.6 476.1,739.3"/>
<path d="M380.7,748.6 435.7,788.1 455.6,802.0"/>
<path d="M402.4,622.0 432.5,656.3"/>
<path d="M448.1,643.8 483.4,671.4 515.6,644.8 546.7,622.0"/>
<path d="M467.8,662.5 457.5,673.9 455.8,682.2 460.6,688.4 494.8,713.3 511.4,692.6 552.9,657.3 570.6,639.6"/>
<path d="M511.4,692.6 536.3,709.2 552.9,722.7"/>
<path d="M536.3,709.2 544.6,699.8"/>
<path d="M557.1,622.0 570.6,639.6 624.6,700.9"/>
<path d="M595.5,622.0 617.3,646.9 658.8,693.6 694.1,734.1"/>
<path d="M617.3,646.9 644.3,622.0"/>
<path d="M413.9,773.5 398.8,802.0"/>
<path d="M435.7,788.1 423.8,802.0"/>
<path d="M450.2,799.5 448.2,802.0"/>
<path d="M610.5,802.0 708.0,729.9"/>
<path d="M627.3,802.0 640.1,790.1 708.0,746.5"/>
<path d="M748.5,622.0 769.2,645.9 791.0,670.8 803.5,679.1 815.9,686.3 821.1,695.7 819.1,709.2 809.7,719.6 791.0,728.9 759.9,740.3 724.6,747.6 715.3,754.8 713.8,765.2 720.5,781.8 737.5,802.0"/>
<path d="M787.9,622.0 769.2,645.9 735.0,690.5 714.2,719.6 708.0,725.8"/>
<path d="M890.7,622.0 865.8,637.6 805.6,679.1 775.5,700.9 708.0,746.5"/>
<path d="M775.5,700.9 791.0,723.7"/>
<path d="M832.5,624.1 820.1,640.7"/>
<path d="M762.3,802.0 837.7,776.6 868.9,764.6"/>
<path d="M837.7,776.6 847.4,802.0"/>
<path d="M850.0,802.0 888.6,788.1"/>
<path d="M922.8,778.7 933.0,802.0"/>
<path d="M935.6,802.0 945.7,799.5 964.4,793.3 979.3,802.0"/>
<path d="M945.7,799.5 946.5,802.0"/>
<path d="M928.0,782.9 964.4,769.4 1011.1,795.3 1013.6,802.0"/>
<path d="M964.4,793.3 980.3,802.0"/>
<path d="M989.9,784.9 979.8,802.0"/>
<path d="M739.1,802.0 754.7,841.4 777.5,899.6 790.0,916.2 785.8,929.7"/>
<path d="M708.0,851.8 793.1,820.7 847.1,803.0"/>
<path d="M708.0,879.8 901.0,816.5 929.1,894.4 866.8,919.3"/>
<path d="M847.1,803.0 857.5,832.1 867.8,858.0 879.3,885.0 890.7,918.2 895.9,930.7"/>
<path d="M735.0,905.8 867.8,858.0 955.0,826.9"/>
<path d="M879.3,885.0 919.7,870.5"/>
<path d="M805.6,922.4 810.8,905.8 854.3,891.3 869.9,929.7"/>
<path d="M830.5,929.7 834.6,921.4 862.6,912.0"/>
<path d="M910.4,904.8 915.6,914.1 936.3,929.7"/>
<path d="M945.7,802.0 972.7,874.7 1011.1,861.2 1036.0,864.3"/>
<path d="M995.5,842.5 1011.1,861.2 1017.3,879.8 1033.9,929.7"/>
<path d="M979.9,804.1 972.7,814.5 991.3,868.4"/>
<path d="M978.9,893.3 1017.3,879.8 1036.0,864.3"/>
<path d="M978.9,893.3 991.3,929.7"/>
<path d="M998.6,886.1 1013.1,929.7"/>
<path d="M1013.1,802.0 1031.8,853.9 1058.8,929.7"/>
<path d="M708.0,858.0 720.5,893.3"/>
<path d="M308.0,884.0 351.6,802.0"/>
<path d="M386.5,825.2 399.3,802.0"/>
<path d="M391.0,815.5 405.6,823.4 423.2,802.0"/>
<path d="M418.0,839.4 426.3,847.7 454.3,815.5 445.0,807.2 418.0,839.4"/>
<path d="M445.0,807.2 449.2,802.0"/>
<path d="M453.3,802.0 466.8,810.3"/>
<path d="M483.4,929.7 530.1,881.9 559.2,843.5 606.9,802.0"/>
<path d="M524.9,929.7 552.9,885.0 575.8,853.9 598.6,829.0 629.7,802.0"/>
<path d="M636.0,857.6 677.5,844.6 698.2,837.3 708.0,833.1"/>
<path d="M677.5,844.6 689.9,879.8"/>
<path d="M698.2,837.3 699.3,829.0 708.0,822.8"/>
<path d="M606.9,926.5 611.1,914.1 623.5,900.6 648.4,875.7 679.6,878.8 708.0,879.8"/>
<path d="M623.5,900.6 638.0,917.2"/>
<path d="M630.8,929.7 633.9,922.4 650.5,904.8 656.7,902.1 681.6,925.5 685.8,929.7"/>
<path d="M679.6,878.8 681.6,887.1 700.3,904.8"/>
<path d="M-2.0,576.8 184.9,556.4 252.3,532.3 293.0,520.8 308.0,522.1"/>
<path d="M0.0,597.1 13.3,626.3 17.1,654.3 13.3,695.0 11.9,702.0"/>
<path d="M8.2,702.0 0.5,752.9 1.8,808.8 23.4,874.9 61.6,929.6"/>
<path d="M20.9,303.3 76.8,316.0 89.5,326.9 101.0,330.7"/>
<path d="M271.4,526.5 303.1,520.2 308.0,521.2"/>
<path d="M409.9,196.6 413.2,186.4"/>
<path d="M633.1,182.1 695.4,163.6 701.8,187.2"/>
</g>
<g fill="#fc1408" stroke="#000" stroke-width="0.8">
<path d="M861.6,318.0 867.8,312.4 890.3,334.6 883.4,340.8ZM850.2,327.3 855.8,322.5 874.1,339.8 868.2,345.4ZM897.3,295.1 903.1,288.9 910.4,295.8 913.5,298.2 911.4,301.4 907.3,298.2 903.1,302.0ZM1048.4,346.0 1050.5,344.5 1065.0,355.3 1058.8,356.4 1052.6,353.3ZM989.3,314.8 994.5,312.8 997.6,318.0 1000.7,316.9 1002.3,320.7 998.6,322.5 1001.1,326.3 997.6,327.3 994.0,320.0 990.7,321.1ZM798.2,348.8 805.9,341.9 810.8,347.3 803.1,354.2ZM807.7,346.1 812.4,342.0 815.8,345.8 811.2,350.0ZM812.6,366.5 817.2,362.3 821.4,367.0 816.7,371.1ZM796.6,382.1 800.4,378.6 802.1,380.5 798.2,383.9ZM828.8,374.1 834.2,369.3 838.4,373.9 833.0,378.8ZM847.5,381.8 852.9,376.9 857.0,381.6 851.6,386.4ZM842.0,386.6 846.6,382.5 850.1,386.3 845.5,390.5ZM835.0,392.8 840.4,387.9 844.6,392.6 839.2,397.4ZM896.3,397.4 900.9,393.2 903.7,396.3 899.1,400.5ZM875.9,290.0 879.8,286.5 884.6,291.9 880.8,295.4ZM880.8,297.0 884.6,293.5 888.1,297.4 884.2,300.9ZM874.5,305.9 879.1,301.8 884.0,307.2 879.4,311.3ZM885.3,280.2 888.4,277.4 889.8,278.9 886.7,281.7ZM896.3,316.0 901.7,311.1 905.8,315.8 900.4,320.6ZM932.2,296.6 938.4,291.1 942.5,295.7 936.4,301.3ZM940.5,290.8 945.9,285.9 948.0,288.3 942.6,293.1ZM954.5,270.3 958.3,266.9 963.9,273.0 960.0,276.5ZM945.1,307.7 949.0,304.2 954.5,310.4 950.7,313.9ZM952.7,301.7 960.5,294.7 963.5,298.1 955.8,305.1ZM961.1,305.4 965.7,301.3 968.5,304.3 963.8,308.5ZM958.5,291.5 965.4,285.3 968.2,288.4 961.2,294.6ZM963.3,281.1 969.5,275.5 973.7,280.1 967.5,285.7ZM972.8,273.5 978.9,268.0 981.7,271.1 975.5,276.6ZM969.0,306.0 970.9,304.3 973.4,307.1 971.5,308.8ZM977.7,307.8 981.1,304.8 984.2,308.2 980.8,311.2ZM981.2,281.8 983.5,279.7 987.0,283.6 984.7,285.6ZM985.9,253.4 990.5,249.2 994.7,253.8 990.1,258.0ZM991.2,262.4 993.5,260.3 995.6,262.7 993.3,264.7ZM998.1,262.1 1001.2,259.4 1003.3,261.7 1000.2,264.5ZM1002.1,269.0 1008.3,263.4 1011.7,267.3 1005.6,272.9ZM998.2,267.0 999.7,265.6 1001.1,267.2 999.6,268.6ZM968.3,246.3 971.4,243.6 972.8,245.1 969.7,247.9ZM977.7,246.3 980.8,243.6 982.2,245.1 979.1,247.9ZM987.6,288.3 993.8,282.8 998.0,287.4 991.8,293.0ZM1009.8,283.9 1014.4,279.7 1018.6,284.4 1013.9,288.5ZM1009.2,294.1 1012.3,291.3 1013.7,292.9 1010.6,295.6ZM1028.1,285.9 1032.7,281.7 1035.5,284.8 1030.9,289.0ZM1030.7,292.3 1033.0,290.2 1035.1,292.5 1032.7,294.6ZM1040.7,296.0 1044.5,292.5 1048.7,297.2 1044.8,300.6ZM1047.2,300.9 1051.0,297.5 1053.8,300.5 1050.0,304.0ZM1000.8,331.1 1002.6,329.5 1004.7,331.8 1002.9,333.4ZM1003.7,338.0 1005.5,336.3 1007.2,338.2 1005.4,339.9ZM968.3,324.0 972.9,319.8 977.1,324.4 972.4,328.6ZM958.2,334.7 962.9,330.6 966.3,334.4 961.7,338.6ZM943.0,337.1 946.9,333.6 950.4,337.5 946.5,340.9ZM950.4,345.2 953.4,342.4 955.5,344.7 952.4,347.5ZM952.1,347.3 955.2,344.5 957.9,347.6 954.9,350.4ZM979.0,337.1 982.9,333.6 987.1,338.3 983.2,341.7ZM984.8,344.0 991.0,338.4 995.8,343.8 989.6,349.4ZM1038.7,316.7 1047.2,309.1 1050.7,313.0 1042.2,320.6ZM1044.3,329.2 1049.7,324.4 1052.5,327.5 1047.1,332.3ZM1030.6,332.9 1034.5,329.5 1038.0,333.3 1034.1,336.8ZM1052.1,341.1 1053.9,339.4 1056.0,341.7 1054.1,343.4ZM969.0,362.4 972.4,359.4 975.5,362.8 972.1,365.8ZM978.5,370.3 984.7,364.8 988.8,369.4 982.7,374.9ZM991.7,363.1 994.7,360.3 996.4,362.1 993.3,364.9ZM1010.7,363.1 1016.8,357.5 1021.0,362.1 1014.8,367.7ZM1025.8,369.5 1030.4,365.3 1036.6,372.3 1032.0,376.4ZM988.0,380.5 992.6,376.4 994.7,378.7 990.1,382.9ZM997.9,386.3 1004.1,380.7 1007.6,384.6 1001.4,390.1ZM640.1,456.4 658.8,444.6 663.4,450.2 645.3,462.2ZM628.8,444.4 634.2,439.5 636.9,442.6 631.5,447.5ZM643.1,444.4 645.4,442.4 647.5,444.7 645.2,446.8ZM632.6,451.9 638.0,447.0 641.4,450.9 636.0,455.8ZM624.9,462.9 631.1,457.4 636.6,463.5 630.5,469.1ZM661.1,443.2 664.1,440.5 669.0,445.9 665.9,448.6ZM664.4,465.1 670.5,459.6 674.0,463.4 667.8,469.0ZM621.3,452.6 623.6,450.5 627.8,455.2 625.5,457.2ZM680.8,471.7 683.1,469.6 686.6,473.5 684.3,475.5ZM655.1,499.4 659.0,495.9 662.5,499.8 658.6,503.2ZM657.9,508.0 662.5,503.9 666.0,507.7 661.3,511.9ZM664.2,498.2 666.5,496.1 667.9,497.6 665.6,499.7ZM613.9,538.8 618.6,534.6 622.7,539.2 618.1,543.4ZM621.6,533.2 625.4,529.8 629.6,534.4 625.7,537.9ZM628.5,531.6 633.1,527.5 635.2,529.8 630.5,533.9ZM645.5,530.1 648.6,527.4 651.4,530.4 648.3,533.2ZM650.3,529.7 653.4,527.0 656.9,530.8 653.8,533.6ZM632.2,544.3 637.6,539.4 641.8,544.1 636.4,548.9ZM626.8,549.6 629.9,546.9 632.7,549.9 629.6,552.7ZM656.8,537.7 662.2,532.8 667.0,538.2 661.6,543.1ZM689.5,526.9 693.3,523.4 699.6,530.4 695.7,533.8ZM704.3,517.0 706.7,514.9 710.8,519.5 708.5,521.6ZM674.1,555.4 678.8,551.2 682.9,555.8 678.3,560.0ZM669.9,563.4 671.8,561.7 673.4,563.6 671.6,565.3ZM641.0,565.5 643.4,563.4 645.4,565.7 643.1,567.8ZM681.8,562.9 685.6,559.4 689.8,564.1 685.9,567.5ZM690.5,574.9 695.1,570.7 698.6,574.5 693.9,578.7ZM697.0,552.2 700.9,548.7 705.7,554.1 701.9,557.6ZM642.3,581.3 647.7,576.4 652.5,581.8 647.1,586.7ZM686.7,589.9 689.7,587.2 693.2,591.0 690.1,593.8ZM619.7,578.8 621.5,577.1 623.2,578.9 621.3,580.6ZM583.8,601.0 588.5,596.9 592.6,601.5 588.0,605.7ZM592.9,592.8 596.0,590.0 598.1,592.3 595.0,595.1ZM598.9,592.4 601.2,590.4 603.3,592.7 601.0,594.8ZM603.9,597.3 608.5,593.1 612.0,597.0 607.4,601.1ZM602.6,604.0 606.4,600.5 609.2,603.6 605.3,607.0ZM572.5,612.8 575.6,610.0 579.1,613.9 576.0,616.6ZM627.8,598.0 630.9,595.2 633.7,598.3 630.6,601.1ZM633.7,590.9 637.5,587.4 644.5,595.1 640.6,598.6ZM668.6,597.8 672.5,594.4 678.0,600.5 674.2,604.0ZM661.7,606.2 666.3,602.1 670.5,606.7 665.8,610.9ZM622.2,610.1 627.6,605.2 631.1,609.1 625.7,613.9ZM611.9,613.2 615.0,610.4 618.5,614.3 615.4,617.0ZM627.5,617.8 629.9,615.7 631.9,618.0 629.6,620.1ZM810.5,409.0 815.1,404.9 819.3,409.5 814.7,413.7ZM829.1,409.5 835.3,403.9 838.1,407.0 831.9,412.5ZM886.2,407.0 892.4,401.4 895.1,404.5 889.0,410.1ZM903.9,407.7 907.0,404.9 909.8,408.0 906.7,410.7ZM863.5,423.9 867.3,420.4 872.2,425.8 868.3,429.3ZM872.0,420.1 878.2,414.6 882.3,419.2 876.2,424.7ZM869.6,430.9 873.5,427.4 877.7,432.1 873.8,435.5ZM883.3,415.4 885.6,413.3 887.7,415.6 885.4,417.7ZM842.3,441.2 846.9,437.0 851.1,441.7 846.4,445.8ZM858.7,447.1 861.8,444.3 864.5,447.4 861.5,450.2ZM856.1,452.8 858.0,451.1 859.6,452.9 857.8,454.6ZM863.2,460.4 866.3,457.6 869.1,460.7 866.0,463.5ZM872.8,452.9 878.2,448.0 884.5,454.9 879.1,459.8ZM898.1,439.6 902.7,435.5 909.0,442.4 904.3,446.6ZM929.6,420.6 932.0,418.5 934.7,421.6 932.4,423.7ZM924.7,446.8 928.6,443.4 931.3,446.4 927.5,449.9ZM933.7,442.4 935.5,440.8 939.0,444.6 937.1,446.3ZM951.5,416.9 958.5,410.7 962.6,415.3 955.7,421.6ZM963.8,409.0 967.7,405.5 973.2,411.7 969.4,415.1ZM883.2,474.7 887.1,471.3 891.9,476.7 888.1,480.1ZM878.5,487.0 880.8,484.9 882.9,487.2 880.6,489.3ZM757.1,442.5 764.8,435.5 771.0,442.5 763.3,449.4ZM767.7,437.5 770.8,434.7 772.9,437.1 769.8,439.8ZM715.6,440.3 717.4,438.6 719.1,440.5 717.2,442.2ZM719.9,445.8 723.0,443.0 725.1,445.4 722.0,448.1ZM715.3,452.3 720.7,447.4 723.5,450.5 718.1,455.4ZM723.8,449.3 726.1,447.2 729.6,451.0 727.3,453.1ZM739.2,453.7 743.1,450.2 746.5,454.1 742.7,457.6ZM734.7,468.9 738.6,465.4 742.7,470.0 738.9,473.5ZM754.2,467.8 757.6,464.8 760.6,468.2 757.2,471.2ZM706.1,461.3 708.5,459.2 711.9,463.1 709.6,465.2ZM730.6,492.3 734.5,488.8 741.4,496.5 737.6,500.0ZM729.5,498.4 731.3,496.8 733.0,498.6 731.2,500.3ZM717.3,510.8 725.0,503.9 727.8,507.0 720.1,513.9ZM711.1,517.1 718.8,510.1 721.5,513.2 713.8,520.1ZM707.1,520.2 710.2,517.4 713.0,520.5 709.9,523.3ZM743.8,509.0 746.9,506.2 751.1,510.9 748.0,513.6ZM732.8,519.9 735.9,517.1 742.1,524.1 739.1,526.8ZM717.8,533.2 722.4,529.0 727.3,534.4 722.6,538.6ZM822.3,549.6 827.0,545.4 831.1,550.0 826.5,554.2ZM852.4,543.7 856.3,540.3 858.3,542.6 854.5,546.0ZM1032.2,419.9 1038.4,414.3 1041.8,418.2 1035.7,423.7ZM1042.8,427.8 1049.0,422.2 1053.2,426.9 1047.0,432.4ZM1054.4,502.5 1057.4,499.7 1059.1,501.6 1056.0,504.4ZM457.5,775.6 466.8,767.3 468.9,770.4 474.1,763.2 472.0,760.7 480.3,750.7 486.5,754.8 480.3,765.2 485.5,768.3 478.2,779.8 472.0,776.6 468.9,782.9 461.6,778.7ZM453.3,789.1 459.5,781.4 473.0,788.1 466.8,799.5 462.6,797.4 464.1,793.3 460.6,791.8 459.1,793.9ZM666.1,670.8 679.6,663.5 681.6,666.6 677.5,669.3 675.0,681.2 670.2,682.2 672.9,671.4 668.1,673.9ZM576.8,700.9 597.6,683.9 600.7,688.0 580.3,704.6ZM569.1,670.2 579.9,661.0 582.0,663.5 571.2,672.6ZM519.5,629.3 523.4,625.9 528.2,631.3 524.4,634.7ZM541.8,630.4 549.5,623.5 553.7,628.1 546.0,635.1ZM555.5,636.3 560.1,632.2 565.0,637.6 560.3,641.7ZM511.2,657.1 515.8,652.9 520.0,657.5 515.3,661.7ZM518.1,650.9 522.0,647.4 525.5,651.3 521.6,654.7ZM541.2,651.5 544.3,648.7 546.0,650.6 542.9,653.4ZM546.5,648.1 550.4,644.7 553.1,647.8 549.3,651.2ZM520.2,666.4 524.1,663.0 527.5,666.8 523.7,670.3ZM532.0,655.2 533.3,654.0 534.4,655.3 533.2,656.4ZM502.5,680.1 507.2,676.0 512.0,681.4 507.4,685.5ZM520.5,691.3 525.1,687.1 529.3,691.8 524.7,695.9ZM511.2,705.8 515.8,701.7 520.0,706.3 515.3,710.5ZM501.9,709.7 505.0,706.9 508.5,710.8 505.4,713.5ZM465.2,687.0 468.3,684.2 470.4,686.5 467.3,689.3ZM470.8,688.9 473.9,686.1 477.3,690.0 474.3,692.8ZM475.8,693.0 481.2,688.1 486.8,694.3 481.4,699.1ZM462.1,702.0 465.2,699.3 469.4,703.9 466.3,706.7ZM466.9,724.8 470.8,721.3 475.0,726.0 471.1,729.4ZM476.3,726.0 478.2,724.3 479.3,725.6 477.4,727.2ZM482.6,719.2 483.8,718.1 485.5,719.9 484.2,721.0ZM559.8,650.6 566.8,644.3 575.1,653.6 568.2,659.9ZM580.5,640.2 583.5,637.4 587.7,642.0 584.6,644.8ZM584.1,645.9 591.0,639.7 596.6,645.8 589.6,652.1ZM589.1,630.4 592.9,626.9 597.8,632.3 593.9,635.8ZM591.6,654.7 594.7,651.9 598.1,655.8 595.1,658.5ZM599.4,663.4 602.5,660.6 605.3,663.7 602.2,666.4ZM602.5,637.9 604.4,636.2 607.1,639.3 605.3,641.0ZM543.3,667.3 548.0,663.2 554.2,670.1 549.6,674.3ZM551.8,665.5 554.1,663.4 556.2,665.7 553.9,667.8ZM560.8,665.2 562.1,664.1 563.7,666.0 562.5,667.1ZM543.1,678.6 545.4,676.5 548.2,679.6 545.9,681.7ZM550.4,676.9 552.0,675.5 553.4,677.1 551.8,678.5ZM541.5,691.2 546.1,687.1 547.8,688.9 543.2,693.1ZM543.8,707.4 546.9,704.6 549.6,707.7 546.6,710.5ZM526.5,713.6 529.6,710.8 531.7,713.1 528.6,715.9ZM617.4,630.8 621.3,627.3 625.5,631.9 621.6,635.4ZM624.4,626.3 628.2,622.9 631.0,626.0 627.1,629.4ZM613.9,637.4 617.0,634.6 619.8,637.7 616.7,640.5ZM608.7,652.1 612.6,648.7 616.7,653.3 612.9,656.8ZM614.6,660.5 620.0,655.7 624.1,660.3 618.7,665.1ZM637.0,640.1 643.2,634.6 647.4,639.2 641.2,644.7ZM641.0,629.7 644.9,626.2 648.4,630.1 644.5,633.6ZM650.9,625.0 655.6,620.9 658.4,624.0 653.7,628.1ZM632.7,659.2 635.0,657.2 637.1,659.5 634.8,661.6ZM635.7,677.4 636.9,676.3 638.3,677.8 637.1,679.0ZM619.1,684.6 622.2,681.8 627.1,687.2 624.0,690.0Z"/>
</g>
</svg>
</body></html>
